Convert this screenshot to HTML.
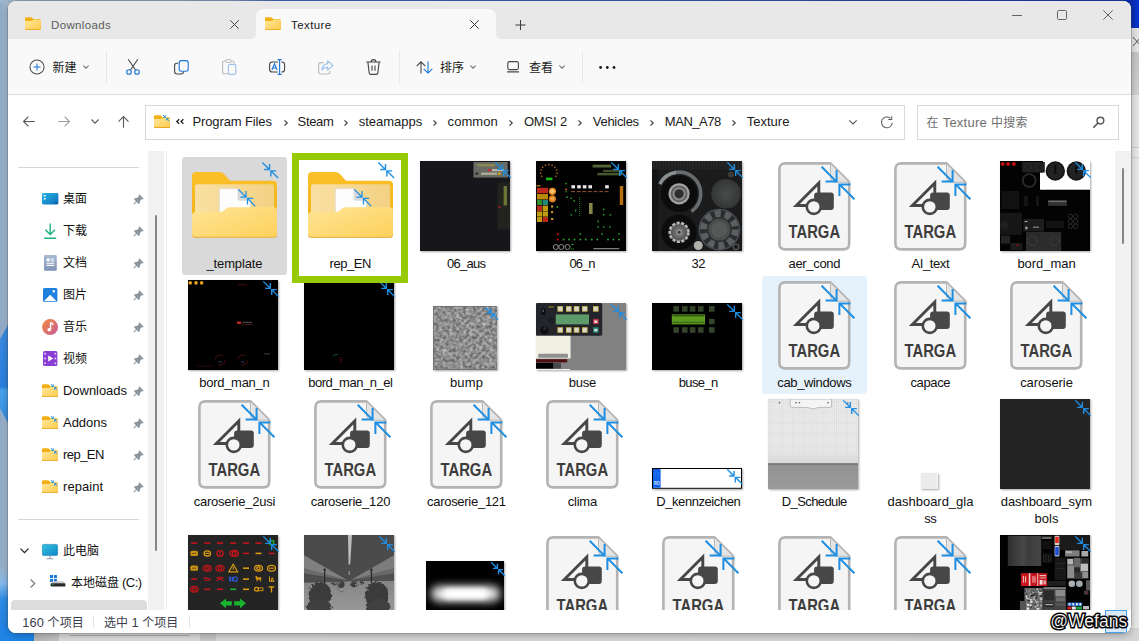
<!DOCTYPE html>
<html lang="zh-CN"><head><meta charset="utf-8"><title>Texture</title>
<style>
*{box-sizing:border-box;margin:0;padding:0}
html,body{width:1139px;height:641px;overflow:hidden}
body{position:relative;background:#a6bbd0;font-family:"Liberation Sans","Noto Sans CJK SC",sans-serif;font-size:13px;color:#111;}
.abs{position:absolute}
.cj{font-family:"Noto Sans CJK SC","Liberation Sans",sans-serif;font-size:12px}
.t{position:absolute;white-space:nowrap;line-height:16px;height:16px}
#win{position:absolute;left:8px;top:1px;width:1123px;height:631.5px;border-radius:8px;background:#fff;overflow:hidden;box-shadow:0 0 0 0.6px rgba(80,80,80,.45),0 2px 9px rgba(0,0,0,.3)}
#tabbar{position:absolute;left:0;top:0;width:1139px;height:39px;background:#e8e8e8}
#toolbar{position:absolute;left:0;top:39px;width:1139px;height:56px;background:#f9f9f9;border-bottom:1px solid #dadada}
#navbar{position:absolute;left:0;top:95px;width:1139px;height:56px;background:#fff}
.sep{position:absolute;width:1px;background:#e9e9e9}
.lbl{position:absolute;width:116px;text-align:center;line-height:17px;font-size:13px;color:#111;white-space:nowrap}
.thumb{position:absolute;box-shadow:1px 1px 2px rgba(0,0,0,.35)}
svg.thumb{overflow:hidden}
svg{position:absolute;overflow:visible}
</style></head><body>
<svg style="left:0;top:0" width="14" height="641" viewBox="0 0 14 641"><defs><linearGradient id="wl1" x1="0" y1="0" x2="1" y2="0"><stop offset="0" stop-color="#8fabc9"/><stop offset="0.6" stop-color="#a9bed3"/><stop offset="1" stop-color="#9fb3c6"/></linearGradient><linearGradient id="wl2" x1="0" y1="0" x2="0" y2="1"><stop offset="0" stop-color="#a6bbd0" stop-opacity="0"/><stop offset="0.873" stop-color="#a6bbd0" stop-opacity="0"/><stop offset="0.91" stop-color="#86bdf0"/><stop offset="0.935" stop-color="#2f8ee9"/><stop offset="1" stop-color="#1c80e4"/></linearGradient><linearGradient id="wl3" x1="0" y1="0" x2="0" y2="1"><stop offset="0" stop-color="#3e8fe6"/><stop offset="0.62" stop-color="#2a80de"/><stop offset="0.66" stop-color="#49a4f0"/><stop offset="1" stop-color="#2f8de6"/></linearGradient></defs><rect width="14" height="641" fill="url(#wl1)"/><path d="M9 323L0 339V408L9 425Z" fill="url(#wl3)"/><rect width="14" height="641" fill="url(#wl2)"/></svg><div class="abs" style="left:0;top:0;width:1139px;height:3px;background:linear-gradient(90deg,#9fb6cd 0,#8aa6cc 20%,#3a68c8 24%,#2a55c0 60%,#1a34b4 85%,#0a2cae 100%)"></div><div class="abs" style="left:1120px;top:0;width:19px;height:28px;background:linear-gradient(90deg,#0a2cae 0,#0a2cae 12px,#0434d0 17px)"></div><div class="abs" style="left:1125px;top:27.5px;width:14px;height:614px;background:#e9e9e9"></div><div class="abs" style="left:1125px;top:27.5px;width:14px;height:25px;background:#e5e5e5"></div><div class="abs" style="left:1125px;top:52px;width:14px;height:43px;background:linear-gradient(180deg,#c6c6c6,#d0d0d0)"></div><div class="abs" style="left:1125px;top:95px;width:14px;height:52px;background:#e6e6e6"></div><svg style="left:1132.5px;top:37px" width="8" height="9"><path d="M0 0L8 9M8 0L0 9" stroke="#555" stroke-width="1" fill="none"/></svg><div class="abs" style="left:1131px;top:147px;width:8px;height:1px;background:#cfcfcf"></div><div class="abs" style="left:1131px;top:157px;width:8px;height:1px;background:#d4d4d4"></div><div class="abs" style="left:0;top:628px;width:1139px;height:13px;background:linear-gradient(90deg,#1f86e8 0,#1f86e8 34px,#b9b9b9 34px,#c6c6c6 59px,#dedede 59px,#dedede 200px,#c9c9c9 200px,#c9c9c9 216px,#d9d9d9 216px,#d6d6d6 100%)"></div><div class="abs" style="left:70px;top:635px;width:120px;height:1px;background:#b0b0b0"></div><div id="win"><div class="abs" id="in" style="left:-8px;top:-1px;width:1139px;height:641px"><div id="tabbar"></div><div class="abs" style="left:256px;top:8.5px;width:240px;height:31px;background:#f9f9f9;border-radius:7px 7px 0 0"></div><svg style="left:250px;top:33px" width="6" height="6"><path d="M6 0V6H0Q6 6 6 0Z" fill="#f9f9f9"/></svg><svg style="left:496px;top:33px" width="6" height="6"><path d="M0 0V6H6Q0 6 0 0Z" fill="#f9f9f9"/></svg><svg style="left:25px;top:16.9px" width="15.8" height="12.8" viewBox="0 0 16 13" preserveAspectRatio="none"><defs><linearGradient id="fs1" x1="0" y1="0" x2="1" y2="1"><stop offset="0" stop-color="#ffe79c"/><stop offset="1" stop-color="#fdca4c"/></linearGradient></defs><path d="M0 1.4Q0 0.2 1.2 0.2H5.7Q6.5 0.2 7.1 0.8L8.7 2.3H14.8Q16 2.3 16 3.5V11.8Q16 13 14.8 13H1.2Q0 13 0 11.8Z" fill="#f1b013"/><path d="M0 4.9Q0 4 0.9 4H6.2Q7 4 7.6 3.5L8.3 3Q8.8 2.7 9.5 2.7H15Q16 2.7 16 3.7V11.8Q16 13 14.8 13H1.2Q0 13 0 11.8Z" fill="url(#fs1)"/><path d="M0 11.2V11.8Q0 13 1.2 13H14.8Q16 13 16 11.8V11.2Q16 12.2 14.8 12.2H1.2Q0 12.2 0 11.2Z" fill="#e6a823"/></svg><div class="t" style="left:51px;top:16.6px;color:#5c5c5c;font-size:11.5px;letter-spacing:0.36px">Downloads</div><svg style="left:229.5px;top:19.5px" width="9" height="9"><path d="M0.3 0.3L8.7 8.7M8.7 0.3L0.3 8.7" stroke="#444" stroke-width="1" fill="none"/></svg><svg style="left:264.5px;top:16.9px" width="15.8" height="12.8" viewBox="0 0 16 13" preserveAspectRatio="none"><defs><linearGradient id="fs2" x1="0" y1="0" x2="1" y2="1"><stop offset="0" stop-color="#ffe79c"/><stop offset="1" stop-color="#fdca4c"/></linearGradient></defs><path d="M0 1.4Q0 0.2 1.2 0.2H5.7Q6.5 0.2 7.1 0.8L8.7 2.3H14.8Q16 2.3 16 3.5V11.8Q16 13 14.8 13H1.2Q0 13 0 11.8Z" fill="#f1b013"/><path d="M0 4.9Q0 4 0.9 4H6.2Q7 4 7.6 3.5L8.3 3Q8.8 2.7 9.5 2.7H15Q16 2.7 16 3.7V11.8Q16 13 14.8 13H1.2Q0 13 0 11.8Z" fill="url(#fs2)"/><path d="M0 11.2V11.8Q0 13 1.2 13H14.8Q16 13 16 11.8V11.2Q16 12.2 14.8 12.2H1.2Q0 12.2 0 11.2Z" fill="#e6a823"/></svg><div class="t" style="left:291px;top:16.6px;color:#1a1a1a;font-size:11.5px;letter-spacing:0.42px">Texture</div><svg style="left:470px;top:19.5px" width="9" height="9"><path d="M0.3 0.3L8.7 8.7M8.7 0.3L0.3 8.7" stroke="#333" stroke-width="1" fill="none"/></svg><svg style="left:515px;top:19.5px" width="10" height="10"><path d="M5.5 0V10M0.5 5H10.5" stroke="#3a3a3a" stroke-width="1" fill="none"/></svg><svg style="left:1011.5px;top:15px" width="10" height="1"><path d="M0 0.5H10" stroke="#666" stroke-width="1"/></svg><svg style="left:1056.5px;top:10px" width="10" height="10"><rect x="0.5" y="0.5" width="9" height="9" rx="1" fill="none" stroke="#666" stroke-width="1"/></svg><svg style="left:1103px;top:10px" width="10" height="10"><path d="M0.3 0.3L9.7 9.7M9.7 0.3L0.3 9.7" stroke="#666" stroke-width="1" fill="none"/></svg><div id="toolbar"></div><svg style="left:28.5px;top:58.5px" width="16" height="16"><circle cx="8" cy="8" r="7.05" fill="none" stroke="#4a4a4a" stroke-width="1.05"/><path d="M8 4.5V11.5M4.5 8H11.5" stroke="#0f72d9" stroke-width="1" fill="none"/></svg><div class="t cj" style="left:52.5px;top:58.7px;color:#1a1a1a">新建</div><svg style="left:83px;top:64.9px" width="6" height="4"><path d="M0.3 0.5L3 3.2L5.7 0.5" stroke="#6a6a6a" stroke-width="1.05" fill="none"/></svg><div class="sep" style="left:106px;top:51px;height:32px"></div><svg style="left:126px;top:59px" width="14" height="16"><path d="M2.2 0.2L9.5 11M11.8 0.2L4.5 11" stroke="#444" stroke-width="1.1" fill="none"/><circle cx="3" cy="13" r="2.3" fill="none" stroke="#1a73d8" stroke-width="1.1"/><circle cx="11" cy="13" r="2.3" fill="none" stroke="#1a73d8" stroke-width="1.1"/></svg><svg style="left:174px;top:59.5px" width="15" height="15"><path d="M4.2 3.2H3Q0.6 3.2 0.6 5.6V11.6Q0.6 14 3 14H7Q9.4 14 9.4 11.8" stroke="#444" stroke-width="1.1" fill="none"/><rect x="5.2" y="0.6" width="9" height="10.6" rx="2.2" fill="none" stroke="#1a73d8" stroke-width="1.1"/></svg><svg style="left:221.5px;top:59px" width="15" height="16" opacity="0.42"><path d="M6.5 14.8H2.2Q0.6 14.8 0.6 13.2V3.6Q0.6 2 2.2 2H3.6M9.4 2H10.6Q12.2 2 12.2 3.6V4.6" stroke="#666" stroke-width="1.1" fill="none"/><rect x="3.6" y="0.6" width="5.8" height="2.8" rx="1.2" fill="none" stroke="#666" stroke-width="1"/><rect x="6.4" y="5.4" width="7.4" height="10" rx="1.6" fill="none" stroke="#1a73d8" stroke-width="1.1"/></svg><svg style="left:269px;top:59px" width="17" height="16"><path d="M8.8 3H3.4Q0.6 3 0.6 5.8V10.2Q0.6 13 3.4 13H8.8M12.4 3H12.8Q15.6 3 15.6 5.8V10.2Q15.6 13 12.8 13H12.4" stroke="#444" stroke-width="1.1" fill="none"/><path d="M10.6 0.6V15.4M8.6 0.6H12.6M8.6 15.4H12.6" stroke="#1a73d8" stroke-width="1.1" fill="none"/><path d="M2.9 11L5.5 4.8L8.1 11M3.8 9H7.2" stroke="#1a73d8" stroke-width="1.1" fill="none"/></svg><svg style="left:317.5px;top:59.5px" width="16" height="15" opacity="0.42"><path d="M5.4 2.6H3Q0.6 2.6 0.6 5V11.6Q0.6 14 3 14H9.6Q12 14 12 11.6V11" stroke="#666" stroke-width="1.1" fill="none"/><path d="M9.6 0.8L15 5.4L9.6 10V7.4Q5.8 7.2 3.8 10Q4.4 4.2 9.6 3.6Z" stroke="#1a73d8" stroke-width="1.1" fill="none" stroke-linejoin="round"/></svg><svg style="left:365.5px;top:59px" width="15" height="16"><path d="M0.4 3H14.6M5 3Q5 0.6 7.5 0.6Q10 0.6 10 3M1.9 3L3.1 13.6Q3.3 15.4 5 15.4H10Q11.7 15.4 11.9 13.6L13.1 3M6 6.4V11.8M9 6.4V11.8" stroke="#444" stroke-width="1.1" fill="none"/></svg><div class="sep" style="left:399px;top:51px;height:32px"></div><svg style="left:415.5px;top:60.5px" width="17" height="13"><path d="M5 12.4V0.8M0.7 5.1L5 0.8L9.3 5.1" stroke="#444" stroke-width="1.05" fill="none"/><path d="M12 0.5V12.1M7.7 7.8L12 12.1L16.3 7.8" stroke="#0f72d9" stroke-width="1.05" fill="none"/></svg><div class="t cj" style="left:440px;top:58.7px;color:#1a1a1a">排序</div><svg style="left:470px;top:64.9px" width="6" height="4"><path d="M0.3 0.5L3 3.2L5.7 0.5" stroke="#6a6a6a" stroke-width="1.05" fill="none"/></svg><svg style="left:507px;top:60.5px" width="13" height="12"><rect x="0.8" y="0.6" width="10.6" height="8" rx="1.6" fill="none" stroke="#444" stroke-width="1.1"/><path d="M0.2 10.9H12" stroke="#444" stroke-width="1.1"/></svg><div class="t cj" style="left:529px;top:58.7px;color:#1a1a1a">查看</div><svg style="left:559px;top:64.9px" width="6" height="4"><path d="M0.3 0.5L3 3.2L5.7 0.5" stroke="#6a6a6a" stroke-width="1.05" fill="none"/></svg><div class="sep" style="left:582px;top:51px;height:32px"></div><svg style="left:598.5px;top:65.8px" width="17" height="3"><circle cx="1.6" cy="1.5" r="1.4" fill="#1c1c1c"/><circle cx="8.3" cy="1.5" r="1.4" fill="#1c1c1c"/><circle cx="15" cy="1.5" r="1.4" fill="#1c1c1c"/></svg><div id="navbar"></div><svg style="left:23px;top:116.4px" width="12" height="11"><path d="M11.8 5.5H0.8M5.4 0.7L0.6 5.5L5.4 10.3" stroke="#555" stroke-width="1.15" fill="none"/></svg><svg style="left:58px;top:116.4px" width="12" height="11"><path d="M0.2 5.5H11.2M6.6 0.7L11.4 5.5L6.6 10.3" stroke="#a0a0a0" stroke-width="1.15" fill="none"/></svg><svg style="left:90.5px;top:119px" width="8" height="5"><path d="M0.4 0.5L4 4.1L7.6 0.5" stroke="#5a5a5a" stroke-width="1.1" fill="none"/></svg><svg style="left:118px;top:115.5px" width="11" height="12"><path d="M5.5 11.8V0.8M0.5 5.6L5.5 0.6L10.5 5.6" stroke="#5a5a5a" stroke-width="1.1" fill="none"/></svg><div class="abs" style="left:145px;top:105px;width:760px;height:35px;border:1px solid #d9d9d9;background:#fff"></div><svg style="left:154px;top:114.8px" width="16" height="12.9" viewBox="0 0 16 13" preserveAspectRatio="none"><defs><linearGradient id="fs3" x1="0" y1="0" x2="1" y2="1"><stop offset="0" stop-color="#ffe79c"/><stop offset="1" stop-color="#fdca4c"/></linearGradient></defs><path d="M0 1.4Q0 0.2 1.2 0.2H5.7Q6.5 0.2 7.1 0.8L8.7 2.3H14.8Q16 2.3 16 3.5V11.8Q16 13 14.8 13H1.2Q0 13 0 11.8Z" fill="#f1b013"/><path d="M0 4.9Q0 4 0.9 4H6.2Q7 4 7.6 3.5L8.3 3Q8.8 2.7 9.5 2.7H15Q16 2.7 16 3.7V11.8Q16 13 14.8 13H1.2Q0 13 0 11.8Z" fill="url(#fs3)"/><path d="M0 11.2V11.8Q0 13 1.2 13H14.8Q16 13 16 11.8V11.2Q16 12.2 14.8 12.2H1.2Q0 12.2 0 11.2Z" fill="#e6a823"/><g stroke="#2a95e8" stroke-width="0.95" fill="none"><path d="M8.8 -0.2L11.2 2.2M9.3 2.4H11.4V0.3"/><path d="M15.2 6.2L12.8 3.8M14.7 3.6H12.6V5.7"/></g></svg><svg style="left:176.2px;top:119.2px" width="8" height="5"><path d="M3.2 0.3L0.8 2.5L3.2 4.7M7.4 0.3L5 2.5L7.4 4.7" stroke="#222" stroke-width="1.35" fill="none"/></svg><div class="t" style="left:192.5px;top:113.5px;letter-spacing:-0.12px;color:#1a1a1a">Program Files</div><div class="t" style="left:297.6px;top:113.5px;letter-spacing:-0.36px;color:#1a1a1a">Steam</div><div class="t" style="left:358.8px;top:113.5px;letter-spacing:-0.03px;color:#1a1a1a">steamapps</div><div class="t" style="left:447.6px;top:113.5px;letter-spacing:0.07px;color:#1a1a1a">common</div><div class="t" style="left:523.9px;top:113.5px;letter-spacing:-0.13px;color:#1a1a1a">OMSI 2</div><div class="t" style="left:592.8px;top:113.5px;letter-spacing:-0.30px;color:#1a1a1a">Vehicles</div><div class="t" style="left:664.8px;top:113.5px;letter-spacing:-0.45px;color:#1a1a1a">MAN_A78</div><div class="t" style="left:746.8px;top:113.5px;letter-spacing:-0.01px;color:#1a1a1a">Texture</div><svg style="left:283.5px;top:119.5px" width="4" height="6"><path d="M0.5 0.4L3.2 3L0.5 5.6" stroke="#444" stroke-width="1.25" fill="none"/></svg><svg style="left:343.9px;top:119.5px" width="4" height="6"><path d="M0.5 0.4L3.2 3L0.5 5.6" stroke="#444" stroke-width="1.25" fill="none"/></svg><svg style="left:433.4px;top:119.5px" width="4" height="6"><path d="M0.5 0.4L3.2 3L0.5 5.6" stroke="#444" stroke-width="1.25" fill="none"/></svg><svg style="left:509.3px;top:119.5px" width="4" height="6"><path d="M0.5 0.4L3.2 3L0.5 5.6" stroke="#444" stroke-width="1.25" fill="none"/></svg><svg style="left:577.9px;top:119.5px" width="4" height="6"><path d="M0.5 0.4L3.2 3L0.5 5.6" stroke="#444" stroke-width="1.25" fill="none"/></svg><svg style="left:650.4px;top:119.5px" width="4" height="6"><path d="M0.5 0.4L3.2 3L0.5 5.6" stroke="#444" stroke-width="1.25" fill="none"/></svg><svg style="left:732.4px;top:119.5px" width="4" height="6"><path d="M0.5 0.4L3.2 3L0.5 5.6" stroke="#444" stroke-width="1.25" fill="none"/></svg><svg style="left:849px;top:120px" width="8" height="5"><path d="M0.3 0.3L4 4L7.7 0.3" stroke="#555" stroke-width="1.1" fill="none"/></svg><svg style="left:880px;top:115.5px" width="13" height="13"><path d="M10.4 2.3A5.4 5.4 0 1 0 12.28 6.9" stroke="#5f5f5f" stroke-width="1.05" fill="none"/><path d="M11.7 0.2V3.5H8.3" stroke="#5f5f5f" stroke-width="1.05" fill="none"/></svg><div class="abs" style="left:917px;top:105px;width:202px;height:35px;border:1px solid #d9d9d9;background:#fff"></div><div class="t" style="left:926.5px;top:114px;color:#6e6e6e;letter-spacing:0.25px"><span class="cj">在</span> Texture <span class="cj">中搜索</span></div><svg style="left:1092.5px;top:116px" width="12" height="12"><circle cx="7.4" cy="4.6" r="3.4" fill="none" stroke="#555" stroke-width="1.4"/><path d="M5 7L0.8 11.2" stroke="#555" stroke-width="1.6" stroke-linecap="round"/></svg><div class="abs" style="left:0;top:150.5px;width:1139px;height:459px;overflow:hidden"><div class="abs" style="left:0;top:-150.5px;width:1139px;height:641px"><div class="abs" style="left:18px;top:166.5px;width:121px;height:1px;background:#d6d6d6"></div><div class="abs" style="left:148px;top:151px;width:16px;height:459px;background:#f1f1f1"></div><div class="abs" style="left:155px;top:215px;width:2.4px;height:336px;background:#858585;border-radius:1px"></div><div class="abs" style="left:166px;top:151px;width:1px;height:459px;background:#ededed"></div><svg style="left:41.8px;top:193.3px" width="16.4" height="11.4" viewBox="0 0 16.4 11.4"><defs><linearGradient id="gd" x1="0" y1="0" x2="1" y2="1"><stop offset="0" stop-color="#29b6e6"/><stop offset="1" stop-color="#0a6db8"/></linearGradient></defs><rect x="0" y="0" width="16.4" height="11.4" rx="1.4" fill="url(#gd)"/><rect x="1.8" y="2" width="1.8" height="1.6" fill="#e8f6ff"/><rect x="1.8" y="5" width="1.8" height="1.6" fill="#e8f6ff"/><rect x="13" y="9.6" width="2.6" height="1.2" fill="#0b4f92"/></svg><svg style="left:44px;top:222.5px" width="12.4" height="16.4" viewBox="0 0 12.4 16.4"><path d="M6.2 0.6V11.4M1.4 6.8L6.2 11.6L11 6.8" stroke="#19b27a" stroke-width="1.35" fill="none"/><path d="M0.2 15.3H12.2" stroke="#19b27a" stroke-width="1.35"/></svg><svg style="left:44px;top:254.7px" width="12.8" height="15.8" viewBox="0 0 12.8 15.8"><defs><linearGradient id="gdoc" x1="0" y1="0" x2="0" y2="1"><stop offset="0" stop-color="#a9b9d1"/><stop offset="1" stop-color="#7f93b5"/></linearGradient></defs><rect x="0" y="0" width="12.8" height="15.8" rx="1.4" fill="url(#gdoc)"/><rect x="2.6" y="3.4" width="3" height="3" fill="#fff"/><path d="M6.6 4H10.2M6.6 6H10.2M2.6 8.2H10.2M2.6 10.4H10.2" stroke="#fff" stroke-width="1.1"/></svg><svg style="left:43px;top:288.0px" width="14.4" height="14" viewBox="0 0 14.4 14"><rect x="0" y="0" width="14.4" height="14" rx="1.6" fill="#1f80e0"/><path d="M0.8 13.2L7.2 6.8L13.6 13.2Z" fill="#fff"/><circle cx="10.8" cy="3.2" r="1.2" fill="#fff"/></svg><svg style="left:41.8px;top:318.5px" width="16.2" height="16.2" viewBox="0 0 16.2 16.2"><defs><linearGradient id="gmu" x1="0" y1="0" x2="1" y2="1"><stop offset="0" stop-color="#f28a3c"/><stop offset="1" stop-color="#c85a9a"/></linearGradient></defs><circle cx="8.1" cy="8.1" r="8" fill="url(#gmu)"/><path d="M8.6 3.4V10.6M8.6 3.4Q10.8 3.8 11 6" stroke="#fff" stroke-width="1.4" fill="none"/><circle cx="7.2" cy="10.8" r="1.8" fill="#fff"/></svg><svg style="left:43px;top:351.1px" width="14.4" height="15" viewBox="0 0 14.4 15"><rect x="0" y="0" width="14.4" height="15" rx="1.6" fill="#8a3dd3"/><path d="M5.2 4.4L10.4 7.5L5.2 10.6Z" fill="#fff"/><g fill="#e6d2fa"><rect x="1.2" y="1.8" width="1.6" height="1.8"/><rect x="1.2" y="6.6" width="1.6" height="1.8"/><rect x="1.2" y="11.4" width="1.6" height="1.8"/><rect x="11.6" y="1.8" width="1.6" height="1.8"/><rect x="11.6" y="6.6" width="1.6" height="1.8"/><rect x="11.6" y="11.4" width="1.6" height="1.8"/></g></svg><svg style="left:42px;top:383.8px" width="15.9" height="13.1" viewBox="0 0 16 13" preserveAspectRatio="none"><defs><linearGradient id="fs4" x1="0" y1="0" x2="1" y2="1"><stop offset="0" stop-color="#ffe79c"/><stop offset="1" stop-color="#fdca4c"/></linearGradient></defs><path d="M0 1.4Q0 0.2 1.2 0.2H5.7Q6.5 0.2 7.1 0.8L8.7 2.3H14.8Q16 2.3 16 3.5V11.8Q16 13 14.8 13H1.2Q0 13 0 11.8Z" fill="#f1b013"/><path d="M0 4.9Q0 4 0.9 4H6.2Q7 4 7.6 3.5L8.3 3Q8.8 2.7 9.5 2.7H15Q16 2.7 16 3.7V11.8Q16 13 14.8 13H1.2Q0 13 0 11.8Z" fill="url(#fs4)"/><path d="M0 11.2V11.8Q0 13 1.2 13H14.8Q16 13 16 11.8V11.2Q16 12.2 14.8 12.2H1.2Q0 12.2 0 11.2Z" fill="#e6a823"/><g stroke="#2a95e8" stroke-width="0.95" fill="none"><path d="M8.8 -0.2L11.2 2.2M9.3 2.4H11.4V0.3"/><path d="M15.2 6.2L12.8 3.8M14.7 3.6H12.6V5.7"/></g></svg><svg style="left:42px;top:415.8px" width="15.9" height="13.1" viewBox="0 0 16 13" preserveAspectRatio="none"><defs><linearGradient id="fs5" x1="0" y1="0" x2="1" y2="1"><stop offset="0" stop-color="#ffe79c"/><stop offset="1" stop-color="#fdca4c"/></linearGradient></defs><path d="M0 1.4Q0 0.2 1.2 0.2H5.7Q6.5 0.2 7.1 0.8L8.7 2.3H14.8Q16 2.3 16 3.5V11.8Q16 13 14.8 13H1.2Q0 13 0 11.8Z" fill="#f1b013"/><path d="M0 4.9Q0 4 0.9 4H6.2Q7 4 7.6 3.5L8.3 3Q8.8 2.7 9.5 2.7H15Q16 2.7 16 3.7V11.8Q16 13 14.8 13H1.2Q0 13 0 11.8Z" fill="url(#fs5)"/><path d="M0 11.2V11.8Q0 13 1.2 13H14.8Q16 13 16 11.8V11.2Q16 12.2 14.8 12.2H1.2Q0 12.2 0 11.2Z" fill="#e6a823"/><g stroke="#2a95e8" stroke-width="0.95" fill="none"><path d="M8.8 -0.2L11.2 2.2M9.3 2.4H11.4V0.3"/><path d="M15.2 6.2L12.8 3.8M14.7 3.6H12.6V5.7"/></g></svg><svg style="left:42px;top:447.8px" width="15.9" height="13.1" viewBox="0 0 16 13" preserveAspectRatio="none"><defs><linearGradient id="fs6" x1="0" y1="0" x2="1" y2="1"><stop offset="0" stop-color="#ffe79c"/><stop offset="1" stop-color="#fdca4c"/></linearGradient></defs><path d="M0 1.4Q0 0.2 1.2 0.2H5.7Q6.5 0.2 7.1 0.8L8.7 2.3H14.8Q16 2.3 16 3.5V11.8Q16 13 14.8 13H1.2Q0 13 0 11.8Z" fill="#f1b013"/><path d="M0 4.9Q0 4 0.9 4H6.2Q7 4 7.6 3.5L8.3 3Q8.8 2.7 9.5 2.7H15Q16 2.7 16 3.7V11.8Q16 13 14.8 13H1.2Q0 13 0 11.8Z" fill="url(#fs6)"/><path d="M0 11.2V11.8Q0 13 1.2 13H14.8Q16 13 16 11.8V11.2Q16 12.2 14.8 12.2H1.2Q0 12.2 0 11.2Z" fill="#e6a823"/><g stroke="#2a95e8" stroke-width="0.95" fill="none"><path d="M8.8 -0.2L11.2 2.2M9.3 2.4H11.4V0.3"/><path d="M15.2 6.2L12.8 3.8M14.7 3.6H12.6V5.7"/></g></svg><svg style="left:42px;top:479.8px" width="15.9" height="13.1" viewBox="0 0 16 13" preserveAspectRatio="none"><defs><linearGradient id="fs7" x1="0" y1="0" x2="1" y2="1"><stop offset="0" stop-color="#ffe79c"/><stop offset="1" stop-color="#fdca4c"/></linearGradient></defs><path d="M0 1.4Q0 0.2 1.2 0.2H5.7Q6.5 0.2 7.1 0.8L8.7 2.3H14.8Q16 2.3 16 3.5V11.8Q16 13 14.8 13H1.2Q0 13 0 11.8Z" fill="#f1b013"/><path d="M0 4.9Q0 4 0.9 4H6.2Q7 4 7.6 3.5L8.3 3Q8.8 2.7 9.5 2.7H15Q16 2.7 16 3.7V11.8Q16 13 14.8 13H1.2Q0 13 0 11.8Z" fill="url(#fs7)"/><path d="M0 11.2V11.8Q0 13 1.2 13H14.8Q16 13 16 11.8V11.2Q16 12.2 14.8 12.2H1.2Q0 12.2 0 11.2Z" fill="#e6a823"/><g stroke="#2a95e8" stroke-width="0.95" fill="none"><path d="M8.8 -0.2L11.2 2.2M9.3 2.4H11.4V0.3"/><path d="M15.2 6.2L12.8 3.8M14.7 3.6H12.6V5.7"/></g></svg><div class="t cj" style="left:63px;top:190.0px">桌面</div><div class="t cj" style="left:63px;top:222.0px">下载</div><div class="t cj" style="left:63px;top:254.0px">文档</div><div class="t cj" style="left:63px;top:286.0px">图片</div><div class="t cj" style="left:63px;top:318.0px">音乐</div><div class="t cj" style="left:63px;top:350.0px">视频</div><div class="t" style="left:63px;top:382.5px;letter-spacing:-0.04px">Downloads</div><div class="t" style="left:63px;top:414.5px;letter-spacing:-0.02px">Addons</div><div class="t" style="left:63px;top:446.5px;letter-spacing:-0.55px">rep_EN</div><div class="t" style="left:63px;top:478.5px;letter-spacing:0.06px">repaint</div><svg style="left:133.4px;top:193.7px" width="11" height="11" viewBox="0 0 11 11"><path d="M6.3 0.3L10.7 4.7L9.5 5.4L8.7 5.2L7 6.9L6.7 9.3L5.7 10L3.8 8.1L1.2 10.5L0.5 9.8L2.9 7.2L1 5.3L1.7 4.3L4.1 4L5.8 2.3L5.6 1.5Z" fill="#8b969e"/></svg><svg style="left:133.4px;top:225.7px" width="11" height="11" viewBox="0 0 11 11"><path d="M6.3 0.3L10.7 4.7L9.5 5.4L8.7 5.2L7 6.9L6.7 9.3L5.7 10L3.8 8.1L1.2 10.5L0.5 9.8L2.9 7.2L1 5.3L1.7 4.3L4.1 4L5.8 2.3L5.6 1.5Z" fill="#8b969e"/></svg><svg style="left:133.4px;top:257.7px" width="11" height="11" viewBox="0 0 11 11"><path d="M6.3 0.3L10.7 4.7L9.5 5.4L8.7 5.2L7 6.9L6.7 9.3L5.7 10L3.8 8.1L1.2 10.5L0.5 9.8L2.9 7.2L1 5.3L1.7 4.3L4.1 4L5.8 2.3L5.6 1.5Z" fill="#8b969e"/></svg><svg style="left:133.4px;top:289.7px" width="11" height="11" viewBox="0 0 11 11"><path d="M6.3 0.3L10.7 4.7L9.5 5.4L8.7 5.2L7 6.9L6.7 9.3L5.7 10L3.8 8.1L1.2 10.5L0.5 9.8L2.9 7.2L1 5.3L1.7 4.3L4.1 4L5.8 2.3L5.6 1.5Z" fill="#8b969e"/></svg><svg style="left:133.4px;top:321.7px" width="11" height="11" viewBox="0 0 11 11"><path d="M6.3 0.3L10.7 4.7L9.5 5.4L8.7 5.2L7 6.9L6.7 9.3L5.7 10L3.8 8.1L1.2 10.5L0.5 9.8L2.9 7.2L1 5.3L1.7 4.3L4.1 4L5.8 2.3L5.6 1.5Z" fill="#8b969e"/></svg><svg style="left:133.4px;top:353.7px" width="11" height="11" viewBox="0 0 11 11"><path d="M6.3 0.3L10.7 4.7L9.5 5.4L8.7 5.2L7 6.9L6.7 9.3L5.7 10L3.8 8.1L1.2 10.5L0.5 9.8L2.9 7.2L1 5.3L1.7 4.3L4.1 4L5.8 2.3L5.6 1.5Z" fill="#8b969e"/></svg><svg style="left:133.4px;top:385.7px" width="11" height="11" viewBox="0 0 11 11"><path d="M6.3 0.3L10.7 4.7L9.5 5.4L8.7 5.2L7 6.9L6.7 9.3L5.7 10L3.8 8.1L1.2 10.5L0.5 9.8L2.9 7.2L1 5.3L1.7 4.3L4.1 4L5.8 2.3L5.6 1.5Z" fill="#8b969e"/></svg><svg style="left:133.4px;top:417.7px" width="11" height="11" viewBox="0 0 11 11"><path d="M6.3 0.3L10.7 4.7L9.5 5.4L8.7 5.2L7 6.9L6.7 9.3L5.7 10L3.8 8.1L1.2 10.5L0.5 9.8L2.9 7.2L1 5.3L1.7 4.3L4.1 4L5.8 2.3L5.6 1.5Z" fill="#8b969e"/></svg><svg style="left:133.4px;top:449.7px" width="11" height="11" viewBox="0 0 11 11"><path d="M6.3 0.3L10.7 4.7L9.5 5.4L8.7 5.2L7 6.9L6.7 9.3L5.7 10L3.8 8.1L1.2 10.5L0.5 9.8L2.9 7.2L1 5.3L1.7 4.3L4.1 4L5.8 2.3L5.6 1.5Z" fill="#8b969e"/></svg><svg style="left:133.4px;top:481.7px" width="11" height="11" viewBox="0 0 11 11"><path d="M6.3 0.3L10.7 4.7L9.5 5.4L8.7 5.2L7 6.9L6.7 9.3L5.7 10L3.8 8.1L1.2 10.5L0.5 9.8L2.9 7.2L1 5.3L1.7 4.3L4.1 4L5.8 2.3L5.6 1.5Z" fill="#8b969e"/></svg><div class="abs" style="left:18px;top:519px;width:121px;height:1px;background:#d6d6d6"></div><svg style="left:20px;top:547.9px" width="9" height="6"><path d="M0.5 0.6L4.5 4.6L8.5 0.6" stroke="#222" stroke-width="1.3" fill="none"/></svg><svg style="left:42px;top:543.5px" width="16" height="15.4" viewBox="0 0 16 15.4"><defs><linearGradient id="gpc" x1="0" y1="0" x2="1" y2="1"><stop offset="0" stop-color="#35c2e2"/><stop offset="1" stop-color="#0f86c6"/></linearGradient></defs><rect x="0.4" y="0.4" width="15.2" height="11.2" rx="1.4" fill="url(#gpc)" stroke="#1a7fb5" stroke-width="0.6"/><path d="M8 11.6V14.4M4.6 14.7H11.4" stroke="#8a9aa6" stroke-width="1.1"/></svg><div class="t cj" style="left:63px;top:542.0px">此电脑</div><svg style="left:29.5px;top:578.7px" width="6" height="9"><path d="M0.6 0.5L4.8 4.5L0.6 8.5" stroke="#777" stroke-width="1.1" fill="none"/></svg><svg style="left:50px;top:575.1px" width="15.4" height="12" viewBox="0 0 15.4 12"><g fill="#1a78d6"><rect x="0" y="0" width="3" height="3"/><rect x="3.9" y="0" width="3" height="3"/><rect x="0" y="3.9" width="3" height="3"/><rect x="3.9" y="3.9" width="3" height="3"/></g><path d="M2.4 7.6L4 6.2H13L15.2 8.4H0.8Z" fill="#c8c8c8"/><rect x="0.6" y="8.2" width="14.8" height="3.2" rx="0.6" fill="#2b2b2b"/><rect x="2.2" y="9.2" width="1.2" height="1" fill="#38d048"/></svg><div class="t cj" style="left:71px;top:574.0px">本地磁盘<span style="font-family:'Liberation Sans';font-size:13px;letter-spacing:-0.55px"> (C:)</span></div><div class="abs" style="left:10.5px;top:599.5px;width:136px;height:32px;background:#dcdcdc;border-radius:4px"></div><div class="abs" style="left:182px;top:157px;width:105px;height:118px;background:#d9d9d9;border-radius:3px"></div><div class="abs" style="left:762px;top:276px;width:105px;height:117.5px;background:#e5f1fb;border-radius:3px"></div><svg style="left:191.8px;top:171.5px" width="85" height="66" viewBox="0 0 85 66.5" preserveAspectRatio="none"><defs><linearGradient id="fb1" x1="0" y1="0" x2="0" y2="1"><stop offset="0" stop-color="#fbc02a"/><stop offset="1" stop-color="#efae12"/></linearGradient><linearGradient id="fb2" x1="0" y1="0" x2="1" y2="1"><stop offset="0" stop-color="#ffe596"/><stop offset="1" stop-color="#fdd05a"/></linearGradient><linearGradient id="fb3" x1="0" y1="0" x2="1" y2="0"><stop offset="0" stop-color="#f9e0a2"/><stop offset="1" stop-color="#f3d184"/></linearGradient></defs><path d="M0 4Q0 0 4 0H27Q30 0 32 2L38 8.8H81Q85 8.8 85 12.8V62.5Q85 66.5 81 66.5H4Q0 66.5 0 62.5Z" fill="url(#fb1)"/><path d="M3 14.4Q3 12.4 5 12.4H80Q82 12.4 82 14.4V50H3Z" fill="url(#fb3)"/><path d="M27.4 16.8H45.6L58.6 29V50H27.4Z" fill="#fdfdfd"/><path d="M27.4 16.8H45.6L58.6 29V50H27.4Z" fill="none" stroke="#d8d8d8" stroke-width="0.6"/><path d="M45.6 16.8V27Q45.6 29 47.6 29H58.6Z" fill="#d9d9d9"/><path d="M0 44Q0 40.4 3.6 40.4H27Q30 40.4 31.6 39L34.4 36.6Q36 35.6 38 35.6H81.6Q85 35.6 85 39V62.5Q85 66.5 81 66.5H4Q0 66.5 0 62.5Z" fill="url(#fb2)"/><path d="M0 61.5V62.5Q0 66.5 4 66.5H81Q85 66.5 85 62.5V61.5Q85 65.3 81 65.3H4Q0 65.3 0 61.5Z" fill="#e9b84e"/></svg><svg style="left:237.8px;top:189.1px" width="17.5" height="17.5" viewBox="0 0 34 34"><g stroke="#1e8ee2" stroke-width="2.43" fill="none" stroke-linecap="butt"><path d="M0.6 0.8L15.4 15.6M4.6 15.6H16.4M15.6 4V16.4"/><path d="M33.4 33.2L18.6 18.4M29.4 18.4H17.6M18.4 30V17.6"/></g></svg><svg style="left:262.2px;top:162.2px" width="16.4" height="16.4" viewBox="0 0 34 34"><g stroke="#1e8ee2" stroke-width="2.90" fill="none" stroke-linecap="butt"><path d="M0.6 0.8L15.4 15.6M4.6 15.6H16.4M15.6 4V16.4"/><path d="M33.4 33.2L18.6 18.4M29.4 18.4H17.6M18.4 30V17.6"/></g></svg><div class="lbl" style="left:176.5px;top:254.8px"><span style="letter-spacing:-0.13px;margin-right:0.13px">_template</span></div><svg style="left:307.8px;top:171.5px" width="85" height="66" viewBox="0 0 85 66.5" preserveAspectRatio="none"><defs><linearGradient id="fb1" x1="0" y1="0" x2="0" y2="1"><stop offset="0" stop-color="#fbc02a"/><stop offset="1" stop-color="#efae12"/></linearGradient><linearGradient id="fb2" x1="0" y1="0" x2="1" y2="1"><stop offset="0" stop-color="#ffe596"/><stop offset="1" stop-color="#fdd05a"/></linearGradient><linearGradient id="fb3" x1="0" y1="0" x2="1" y2="0"><stop offset="0" stop-color="#f9e0a2"/><stop offset="1" stop-color="#f3d184"/></linearGradient></defs><path d="M0 4Q0 0 4 0H27Q30 0 32 2L38 8.8H81Q85 8.8 85 12.8V62.5Q85 66.5 81 66.5H4Q0 66.5 0 62.5Z" fill="url(#fb1)"/><path d="M3 14.4Q3 12.4 5 12.4H80Q82 12.4 82 14.4V50H3Z" fill="url(#fb3)"/><path d="M27.4 16.8H45.6L58.6 29V50H27.4Z" fill="#fdfdfd"/><path d="M27.4 16.8H45.6L58.6 29V50H27.4Z" fill="none" stroke="#d8d8d8" stroke-width="0.6"/><path d="M45.6 16.8V27Q45.6 29 47.6 29H58.6Z" fill="#d9d9d9"/><path d="M0 44Q0 40.4 3.6 40.4H27Q30 40.4 31.6 39L34.4 36.6Q36 35.6 38 35.6H81.6Q85 35.6 85 39V62.5Q85 66.5 81 66.5H4Q0 66.5 0 62.5Z" fill="url(#fb2)"/><path d="M0 61.5V62.5Q0 66.5 4 66.5H81Q85 66.5 85 62.5V61.5Q85 65.3 81 65.3H4Q0 65.3 0 61.5Z" fill="#e9b84e"/></svg><svg style="left:353.8px;top:189.1px" width="17.5" height="17.5" viewBox="0 0 34 34"><g stroke="#1e8ee2" stroke-width="2.43" fill="none" stroke-linecap="butt"><path d="M0.6 0.8L15.4 15.6M4.6 15.6H16.4M15.6 4V16.4"/><path d="M33.4 33.2L18.6 18.4M29.4 18.4H17.6M18.4 30V17.6"/></g></svg><svg style="left:378.2px;top:162.2px" width="16.4" height="16.4" viewBox="0 0 34 34"><g stroke="#1e8ee2" stroke-width="2.90" fill="none" stroke-linecap="butt"><path d="M0.6 0.8L15.4 15.6M4.6 15.6H16.4M15.6 4V16.4"/><path d="M33.4 33.2L18.6 18.4M29.4 18.4H17.6M18.4 30V17.6"/></g></svg><div class="lbl" style="left:292.5px;top:254.8px"><span style="letter-spacing:-0.43px;margin-right:0.43px">rep_EN</span></div><svg class="thumb" style="left:420.2px;top:161.0px" width="90" height="90" viewBox="0 0 90 90"><rect x="0.0" y="0.0" width="90.0" height="90.0" fill="#17161a" /><rect x="53.5" y="1.0" width="34.2" height="15.6" fill="#686b64" /><rect x="57.0" y="3.0" width="18.0" height="2.4" fill="#8a8a50" /><rect x="68.0" y="8.0" width="3.0" height="2.4" fill="#c03030" /><rect x="72.0" y="8.0" width="12.0" height="2.2" fill="#b8b8a8" /><rect x="61.0" y="11.6" width="16.0" height="2.2" fill="#b0b098" /><rect x="78.0" y="11.4" width="2.6" height="2.6" fill="#d0a020" /><circle cx="56.8" cy="12.6" r="1.4" fill="#2a2a2a" /><rect x="77.6" y="21.4" width="12.4" height="47.0" fill="#22231f" /><rect x="83.6" y="25.0" width="3.4" height="19.5" fill="#6e7436" /><rect x="78.4" y="45.4" width="2.0" height="1.6" fill="#b02020" /></svg><svg style="left:494.59999999999997px;top:162.2px" width="16" height="16" viewBox="0 0 34 34"><g stroke="#1e8ee2" stroke-width="2.97" fill="none" stroke-linecap="butt"><path d="M0.6 0.8L15.4 15.6M4.6 15.6H16.4M15.6 4V16.4"/><path d="M33.4 33.2L18.6 18.4M29.4 18.4H17.6M18.4 30V17.6"/></g></svg><div class="lbl" style="left:408.5px;top:254.8px"><span style="letter-spacing:-0.74px;margin-right:0.74px">06_aus</span></div><svg class="thumb" style="left:536.2px;top:161.0px" width="90" height="90" viewBox="0 0 90 90"><rect x="0.0" y="0.0" width="90.0" height="90.0" fill="#020202" /><rect x="1.0" y="26.8" width="11.0" height="5.5" fill="#c1281c" /><rect x="1.0" y="33.0" width="11.0" height="5.5" fill="#b98a0a" /><rect x="1.0" y="39.0" width="5.0" height="5.0" fill="#2f8f2f" /><rect x="6.6" y="39.0" width="5.4" height="5.0" fill="#1f8a7a" /><rect x="1.0" y="44.6" width="5.0" height="5.4" fill="#b8281c" /><rect x="6.6" y="44.6" width="5.4" height="5.4" fill="#c09a10" /><rect x="1.0" y="50.4" width="5.0" height="5.2" fill="#c09a10" /><rect x="6.6" y="50.4" width="5.4" height="5.2" fill="#c09a10" /><rect x="1.0" y="56.0" width="5.0" height="5.0" fill="#c09a10" /><rect x="6.6" y="56.0" width="5.4" height="5.0" fill="#b8281c" /><rect x="0.4" y="24.2" width="4.0" height="1.2" fill="#c08a10" /><circle cx="16.4" cy="30.3" r="3.6" fill="#e8902a" /><circle cx="16.4" cy="30.3" r="2.0" fill="#f8c878" /><circle cx="16.4" cy="37.8" r="3.6" fill="#d87a1a" /><circle cx="16.4" cy="37.8" r="2.0" fill="#f0a848" /><rect x="15.0" y="44.4" width="2.2" height="2.2" fill="#c09030" /><rect x="15.0" y="50.0" width="2.2" height="2.2" fill="#c09030" /><rect x="15.0" y="57.0" width="2.4" height="2.0" fill="#c09030" /><rect x="35.4" y="24.2" width="3.6" height="3.2" fill="#e8e8e8" /><rect x="41.2" y="24.2" width="3.6" height="3.2" fill="#e8e8e8" /><rect x="46.8" y="24.2" width="3.6" height="3.2" fill="#e8e8e8" /><rect x="52.4" y="24.2" width="3.6" height="3.2" fill="#e8e8e8" /><rect x="69.2" y="24.2" width="3.6" height="3.2" fill="#e8e8e8" /><rect x="35.2" y="30.2" width="3.8" height="0.9" fill="#a85a34" /><rect x="40.8" y="30.2" width="3.8" height="0.9" fill="#a85a34" /><rect x="46.4" y="30.2" width="3.8" height="0.9" fill="#a85a34" /><rect x="52.0" y="30.2" width="3.8" height="0.9" fill="#a85a34" /><rect x="57.6" y="30.2" width="3.8" height="0.9" fill="#a85a34" /><rect x="63.2" y="30.2" width="3.8" height="0.9" fill="#a85a34" /><rect x="68.8" y="30.2" width="3.8" height="0.9" fill="#a85a34" /><rect x="56.6" y="3.7" width="18.4" height="2.8" fill="#56663a" /><rect x="67.0" y="8.8" width="19.0" height="2.2" fill="#3f4f2c" /><rect x="61.5" y="11.8" width="24.5" height="2.6" fill="#46562e" /><rect x="83.8" y="25.0" width="3.4" height="19.0" fill="#b8700a" /><rect x="53.0" y="42.0" width="3.6" height="11.0" fill="#86864a" /><rect x="43.3" y="36.0" width="0.8" height="1.0" fill="#2fa02f" /><rect x="43.3" y="38.0" width="0.8" height="1.0" fill="#2fa02f" /><rect x="43.3" y="40.0" width="0.8" height="1.0" fill="#2fa02f" /><rect x="43.3" y="42.0" width="0.8" height="1.0" fill="#2fa02f" /><rect x="43.3" y="44.0" width="0.8" height="1.0" fill="#2fa02f" /><rect x="43.3" y="46.0" width="0.8" height="1.0" fill="#2fa02f" /><rect x="43.3" y="48.0" width="0.8" height="1.0" fill="#2fa02f" /><rect x="43.3" y="50.0" width="0.8" height="1.0" fill="#2fa02f" /><rect x="43.3" y="52.0" width="0.8" height="1.0" fill="#2fa02f" /><rect x="43.3" y="54.0" width="0.8" height="1.0" fill="#2fa02f" /><circle cx="5.7" cy="15.3" r="0.8" fill="#c87a20" /><circle cx="4.6" cy="12.2" r="0.8" fill="#c87a20" /><circle cx="5.0" cy="9.0" r="0.8" fill="#c87a20" /><circle cx="6.7" cy="6.2" r="0.8" fill="#c87a20" /><circle cx="9.5" cy="4.3" r="0.8" fill="#c87a20" /><circle cx="12.8" cy="3.6" r="0.8" fill="#c87a20" /><circle cx="16.1" cy="4.3" r="0.8" fill="#c87a20" /><circle cx="18.9" cy="6.2" r="0.8" fill="#c87a20" /><circle cx="20.6" cy="9.0" r="0.8" fill="#c87a20" /><circle cx="21.0" cy="12.2" r="0.8" fill="#c87a20" /><circle cx="19.9" cy="15.3" r="0.8" fill="#c87a20" /><rect x="10.0" y="16.6" width="6.4" height="2.6" fill="#16c016" /><circle cx="30.0" cy="22.6" r="0.9" fill="#2a9a2a" /><circle cx="31.0" cy="36.2" r="0.9" fill="#2a9a2a" /><circle cx="35.0" cy="37.3" r="0.9" fill="#2a9a2a" /><circle cx="38.2" cy="39.8" r="0.9" fill="#2a9a2a" /><circle cx="21.4" cy="46.0" r="0.9" fill="#2a9a2a" /><circle cx="39.6" cy="49.5" r="0.9" fill="#2a9a2a" /><circle cx="35.4" cy="53.8" r="0.9" fill="#2a9a2a" /><circle cx="62.2" cy="60.4" r="0.9" fill="#2a9a2a" /><circle cx="62.2" cy="65.8" r="0.9" fill="#2a9a2a" /><circle cx="67.7" cy="65.8" r="0.9" fill="#2a9a2a" /><circle cx="74.0" cy="65.8" r="0.9" fill="#2a9a2a" /><circle cx="67.7" cy="53.8" r="0.9" fill="#2a9a2a" /><circle cx="74.4" cy="53.8" r="0.9" fill="#2a9a2a" /><circle cx="66.0" cy="72.9" r="0.9" fill="#2a9a2a" /><circle cx="83.0" cy="72.9" r="0.9" fill="#2a9a2a" /><circle cx="44.3" cy="72.9" r="0.9" fill="#2a9a2a" /><circle cx="67.7" cy="48.4" r="0.9" fill="#2a9a2a" /><circle cx="27.6" cy="78.6" r="1.0" fill="#2a9a2a" /><circle cx="33.0" cy="78.6" r="1.0" fill="#2a9a2a" /><circle cx="38.5" cy="78.6" r="1.0" fill="#2a9a2a" /><circle cx="44.3" cy="78.6" r="1.0" fill="#2a9a2a" /><circle cx="49.8" cy="78.6" r="1.0" fill="#2a9a2a" /><circle cx="55.7" cy="78.6" r="1.0" fill="#2a9a2a" /><circle cx="61.2" cy="78.6" r="1.0" fill="#2a9a2a" /><circle cx="72.0" cy="78.6" r="1.0" fill="#2a9a2a" /><circle cx="77.5" cy="78.6" r="1.0" fill="#2a9a2a" /><circle cx="83.0" cy="78.6" r="1.0" fill="#2a9a2a" /><circle cx="30.0" cy="28.4" r="1.0" fill="#d06020" /><circle cx="30.0" cy="30.8" r="0.8" fill="#30a030" /><circle cx="21.8" cy="72.9" r="1.1" fill="#c01010" /><circle cx="21.8" cy="78.6" r="1.1" fill="#c01010" /><circle cx="19.8" cy="86.0" r="2.5" fill="none" stroke="#9a9a9a" stroke-width="0.9"/><circle cx="25.3" cy="86.0" r="2.5" fill="none" stroke="#9a9a9a" stroke-width="0.9"/><circle cx="31.5" cy="86.0" r="2.5" fill="none" stroke="#9a9a9a" stroke-width="0.9"/><rect x="57.3" y="87.0" width="26.0" height="1.3" fill="#7a7a7a" /><rect x="35.0" y="83.0" width="3.0" height="0.8" fill="#2a9a2a" /><rect x="35.0" y="87.6" width="3.0" height="0.8" fill="#2a9a2a" /></svg><svg style="left:610.6px;top:162.2px" width="16" height="16" viewBox="0 0 34 34"><g stroke="#1e8ee2" stroke-width="2.97" fill="none" stroke-linecap="butt"><path d="M0.6 0.8L15.4 15.6M4.6 15.6H16.4M15.6 4V16.4"/><path d="M33.4 33.2L18.6 18.4M29.4 18.4H17.6M18.4 30V17.6"/></g></svg><div class="lbl" style="left:524.5px;top:254.8px"><span style="letter-spacing:-1.03px;margin-right:1.03px">06_n</span></div><svg class="thumb" style="left:652.2px;top:161.0px" width="90" height="90" viewBox="0 0 90 90"><rect x="0.0" y="0.0" width="90.0" height="90.0" fill="#1b1b1b" /><defs><pattern id="p32" width="3" height="8" patternUnits="userSpaceOnUse"><rect width="3" height="8" fill="#262626"/><rect width="1.2" height="8" fill="#1d1d1d"/></pattern><radialGradient id="g32a"><stop offset="0" stop-color="#4a4c4c"/><stop offset="1" stop-color="#343636"/></radialGradient></defs><rect x="0.0" y="0.0" width="90.0" height="8.5" fill="url(#p32)" /><rect x="0.0" y="8.0" width="6.0" height="82.0" fill="#141414" /><circle cx="27.1" cy="32.8" r="18.3" fill="#0c0c0c" /><circle cx="27.1" cy="32.8" r="10.6" fill="#a2a2a2" /><circle cx="27.1" cy="32.8" r="8.4" fill="#5e5e5e" /><circle cx="27.1" cy="32.8" r="6.6" fill="#8a8a8a" /><circle cx="27.1" cy="32.8" r="4.6" fill="#2e2e2e" /><path d="M7.9 23.0A21.6 21.6 0 1 1 39.5 50.5" fill="none" stroke="#666b6e" stroke-width="3.6"/><path d="M7.9 23.0A21.6 21.6 0 0 1 24.1 11.4" fill="none" stroke="#8a8f92" stroke-width="3.2"/><circle cx="27.1" cy="71.3" r="17.6" fill="#0c0c0c" /><circle cx="27.1" cy="71.3" r="9.4" fill="#5a5a5a" stroke="#b4b4b4" stroke-width="2.6" stroke-dasharray="3.2 1.4"/><circle cx="27.1" cy="71.3" r="6.0" fill="#6a6a6a" /><circle cx="27.1" cy="71.3" r="3.2" fill="#8a8a8a" /><circle cx="27.1" cy="71.3" r="1.4" fill="#3a3a3a" /><circle cx="74.1" cy="32.8" r="14.8" fill="url(#g32a)" /><circle cx="79.0" cy="13.6" r="3.0" fill="#3a3a3a" /><circle cx="67.4" cy="68.6" r="20.8" fill="#2b2c2e" /><circle cx="67.4" cy="68.6" r="16" fill="none" stroke="#5c5e60" stroke-width="7" stroke-dasharray="6 4.05"/><circle cx="67.4" cy="68.6" r="20.2" fill="none" stroke="#4a5058" stroke-width="1.2"/><circle cx="67.4" cy="68.6" r="11.0" fill="#4b4d4d" /><circle cx="67.4" cy="68.6" r="8.0" fill="#565858" /><circle cx="46.3" cy="84.5" r="4.5" fill="#b2b0aa" /><circle cx="84.0" cy="85.8" r="2.8" fill="none" stroke="#5a5a5a" stroke-width="1.2"/></svg><svg style="left:726.6px;top:162.2px" width="16" height="16" viewBox="0 0 34 34"><g stroke="#1e8ee2" stroke-width="2.97" fill="none" stroke-linecap="butt"><path d="M0.6 0.8L15.4 15.6M4.6 15.6H16.4M15.6 4V16.4"/><path d="M33.4 33.2L18.6 18.4M29.4 18.4H17.6M18.4 30V17.6"/></g></svg><div class="lbl" style="left:640.5px;top:254.8px"><span style="letter-spacing:-0.54px;margin-right:0.54px">32</span></div><svg style="left:778.1px;top:162px" width="73" height="89" viewBox="0 0 73 89"><path d="M7.5 1.4H52.5L71.2 20.2V81.5Q71.2 87.4 65.2 87.4H7.5Q1.4 87.4 1.4 81.5V7.4Q1.4 1.4 7.5 1.4Z" fill="#f5f5f5" stroke="#b3b3b3" stroke-width="2.6" stroke-linejoin="round"/><path d="M52.5 1.6V14.2Q52.5 20.2 58.5 20.2H71Z" fill="#e4e4e4" stroke="#b9b9b9" stroke-width="1" stroke-linejoin="round"/><path d="M40.8 21V43.5H18.3Z" fill="none" stroke="#474747" stroke-width="2.9" stroke-linejoin="miter"/><rect x="36.1" y="30.4" width="19.7" height="17.6" rx="3" fill="#474747"/><circle cx="35.8" cy="44.9" r="7" fill="#f5f5f5" stroke="#474747" stroke-width="2.6"/><text x="36.3" y="75.6" text-anchor="middle" font-family="Liberation Sans, sans-serif" font-weight="700" font-size="18.4" fill="#3d3d3d" textLength="51.6" lengthAdjust="spacingAndGlyphs">TARGA</text></svg><svg style="left:821.1px;top:166.2px" width="34" height="34" viewBox="0 0 34 34"><g stroke="#1e8ee2" stroke-width="2.00" fill="none" stroke-linecap="butt"><path d="M0.6 0.8L15.4 15.6M4.6 15.6H16.4M15.6 4V16.4"/><path d="M33.4 33.2L18.6 18.4M29.4 18.4H17.6M18.4 30V17.6"/></g></svg><div class="lbl" style="left:756.5px;top:254.8px"><span style="letter-spacing:-0.34px;margin-right:0.34px">aer_cond</span></div><svg style="left:894.1px;top:162px" width="73" height="89" viewBox="0 0 73 89"><path d="M7.5 1.4H52.5L71.2 20.2V81.5Q71.2 87.4 65.2 87.4H7.5Q1.4 87.4 1.4 81.5V7.4Q1.4 1.4 7.5 1.4Z" fill="#f5f5f5" stroke="#b3b3b3" stroke-width="2.6" stroke-linejoin="round"/><path d="M52.5 1.6V14.2Q52.5 20.2 58.5 20.2H71Z" fill="#e4e4e4" stroke="#b9b9b9" stroke-width="1" stroke-linejoin="round"/><path d="M40.8 21V43.5H18.3Z" fill="none" stroke="#474747" stroke-width="2.9" stroke-linejoin="miter"/><rect x="36.1" y="30.4" width="19.7" height="17.6" rx="3" fill="#474747"/><circle cx="35.8" cy="44.9" r="7" fill="#f5f5f5" stroke="#474747" stroke-width="2.6"/><text x="36.3" y="75.6" text-anchor="middle" font-family="Liberation Sans, sans-serif" font-weight="700" font-size="18.4" fill="#3d3d3d" textLength="51.6" lengthAdjust="spacingAndGlyphs">TARGA</text></svg><svg style="left:937.1px;top:166.2px" width="34" height="34" viewBox="0 0 34 34"><g stroke="#1e8ee2" stroke-width="2.00" fill="none" stroke-linecap="butt"><path d="M0.6 0.8L15.4 15.6M4.6 15.6H16.4M15.6 4V16.4"/><path d="M33.4 33.2L18.6 18.4M29.4 18.4H17.6M18.4 30V17.6"/></g></svg><div class="lbl" style="left:872.5px;top:254.8px"><span style="letter-spacing:-0.38px;margin-right:0.38px">AI_text</span></div><svg class="thumb" style="left:1000.2px;top:161.0px" width="90" height="90" viewBox="0 0 90 90"><rect x="0.0" y="0.0" width="90.0" height="90.0" fill="#030303" /><rect x="43.0" y="0.0" width="47.0" height="28.7" fill="#ffffff" /><rect x="40.0" y="11.5" width="4.0" height="17.2" fill="#ffffff" /><circle cx="55.3" cy="10.0" r="9.7" fill="#151515" /><circle cx="55.3" cy="10.0" r="8.0" fill="#222" /><rect x="54.3" y="4.0" width="2.0" height="9.0" fill="#0a0a0a" /><circle cx="76.3" cy="10.0" r="9.7" fill="#151515" /><circle cx="76.3" cy="10.0" r="8.0" fill="#222" /><rect x="75.3" y="4.0" width="2.0" height="9.0" fill="#0a0a0a" /><circle cx="2.7" cy="3.0" r="2.0" fill="#c01010" /><circle cx="8.1" cy="3.0" r="2.0" fill="#c01010" /><circle cx="13.9" cy="3.0" r="2.0" fill="#c01010" /><rect x="22.0" y="1.0" width="22.8" height="10.5" fill="#1e1e1e" /><circle cx="28.0" cy="6.0" r="3.6" fill="none" stroke="#3a3a3a" stroke-width="0.8" stroke-dasharray="1 0.6"/><circle cx="38.6" cy="6.0" r="3.6" fill="none" stroke="#3a3a3a" stroke-width="0.8" stroke-dasharray="1 0.6"/><circle cx="29.2" cy="19.5" r="6.4" fill="none" stroke="#2b2b2b" stroke-width="1.8"/><rect x="26.0" y="71.0" width="35.2" height="19.0" fill="#2b2b2b" /><circle cx="32.6" cy="80.0" r="4.6" fill="none" stroke="#555" stroke-width="0.8" stroke-dasharray="0.8 0.7"/><circle cx="54.6" cy="80.0" r="4.6" fill="none" stroke="#555" stroke-width="0.8" stroke-dasharray="0.8 0.7"/><rect x="23.4" y="58.0" width="20.6" height="12.5" fill="#1d1d1d" /><rect x="24.6" y="60.0" width="3.0" height="1.0" fill="#aaa" /><rect x="33.0" y="65.6" width="6.0" height="1.2" fill="#888" /><circle cx="26.4" cy="67.0" r="1.4" fill="#999" /><rect x="0.0" y="51.8" width="22.0" height="22.0" fill="#161616" /><circle cx="4.6" cy="64.0" r="4.4" fill="#1f1f1f" /><rect x="1.0" y="74.6" width="9.0" height="8.0" fill="#222" /><rect x="10.4" y="82.0" width="12.0" height="7.0" fill="#1c1c1c" /><rect x="16.6" y="83.4" width="1.6" height="1.6" fill="#a01010" /><rect x="47.9" y="39.3" width="19.0" height="5.5" fill="#333" /><rect x="48.4" y="39.8" width="18.0" height="0.8" fill="#999" /><circle cx="70.4" cy="55.4" r="2.2" fill="none" stroke="#2e2e2e" stroke-width="0.9"/><circle cx="75.6" cy="55.4" r="2.2" fill="none" stroke="#2e2e2e" stroke-width="0.9"/><circle cx="70.4" cy="60.4" r="2.2" fill="none" stroke="#2e2e2e" stroke-width="0.9"/><circle cx="75.6" cy="60.4" r="2.2" fill="none" stroke="#2e2e2e" stroke-width="0.9"/><circle cx="70.4" cy="65.4" r="2.2" fill="none" stroke="#2e2e2e" stroke-width="0.9"/><circle cx="75.6" cy="65.4" r="2.2" fill="none" stroke="#2e2e2e" stroke-width="0.9"/><rect x="1.4" y="30.0" width="18.0" height="18.0" fill="#111" /><rect x="24.0" y="35.0" width="4.0" height="10.0" fill="#151515" /><rect x="36.0" y="35.0" width="3.0" height="10.0" fill="#151515" /><rect x="46.0" y="60.0" width="18.0" height="7.0" fill="#121212" /></svg><svg style="left:1074.6000000000001px;top:162.2px" width="16" height="16" viewBox="0 0 34 34"><g stroke="#1e8ee2" stroke-width="2.97" fill="none" stroke-linecap="butt"><path d="M0.6 0.8L15.4 15.6M4.6 15.6H16.4M15.6 4V16.4"/><path d="M33.4 33.2L18.6 18.4M29.4 18.4H17.6M18.4 30V17.6"/></g></svg><div class="lbl" style="left:988.5px;top:254.8px"><span style="letter-spacing:-0.04px;margin-right:0.04px">bord_man</span></div><svg class="thumb" style="left:188.2px;top:280.0px" width="90" height="90" viewBox="0 0 90 90"><rect x="0.0" y="0.0" width="90.0" height="90.0" fill="#000" /><circle cx="2.2" cy="2.9" r="1.8" fill="#e8a020" /><circle cx="8.0" cy="2.9" r="1.8" fill="#e8a020" /><circle cx="13.6" cy="2.9" r="1.8" fill="#e8a020" /><rect x="49.0" y="41.4" width="4.0" height="2.6" fill="#b02a2a" /><rect x="54.0" y="41.8" width="10.0" height="1.2" fill="#4a4040" /><rect x="53.0" y="44.2" width="12.0" height="0.8" fill="#501818" /><circle cx="32.3" cy="80.0" r="5.0" fill="none" stroke="#4a1010" stroke-width="1" stroke-dasharray="10 6"/><circle cx="55.0" cy="80.0" r="5.0" fill="none" stroke="#4a1010" stroke-width="1" stroke-dasharray="10 6"/><rect x="30.4" y="81.4" width="4.0" height="1.2" fill="#203048" /><rect x="53.0" y="81.4" width="4.0" height="1.2" fill="#203048" /><rect x="76.0" y="73.0" width="6.0" height="1.6" fill="#2a2a2a" /><rect x="9.0" y="85.6" width="16.0" height="0.8" fill="#3a0808" /><rect x="50.0" y="4.0" width="9.0" height="1.6" fill="#300808" /></svg><svg style="left:262.59999999999997px;top:281.2px" width="16" height="16" viewBox="0 0 34 34"><g stroke="#1e8ee2" stroke-width="2.97" fill="none" stroke-linecap="butt"><path d="M0.6 0.8L15.4 15.6M4.6 15.6H16.4M15.6 4V16.4"/><path d="M33.4 33.2L18.6 18.4M29.4 18.4H17.6M18.4 30V17.6"/></g></svg><div class="lbl" style="left:176.5px;top:373.8px"><span style="letter-spacing:-0.28px;margin-right:0.28px">bord_man_n</span></div><svg class="thumb" style="left:304.2px;top:280.0px" width="90" height="90" viewBox="0 0 90 90"><rect x="0.0" y="0.0" width="90.0" height="90.0" fill="#000" /><path d="M29 76Q31 74 34 74.4" stroke="#0a6a4a" stroke-width="0.8" fill="none"/><path d="M36 77L37.6 80L36 83" stroke="#700a0a" stroke-width="0.9" fill="none"/></svg><svg style="left:378.59999999999997px;top:281.2px" width="16" height="16" viewBox="0 0 34 34"><g stroke="#1e8ee2" stroke-width="2.97" fill="none" stroke-linecap="butt"><path d="M0.6 0.8L15.4 15.6M4.6 15.6H16.4M15.6 4V16.4"/><path d="M33.4 33.2L18.6 18.4M29.4 18.4H17.6M18.4 30V17.6"/></g></svg><div class="lbl" style="left:292.5px;top:373.8px"><span style="letter-spacing:-0.47px;margin-right:0.47px">bord_man_n_el</span></div><svg class="thumb" style="left:432.9px;top:306.0px" width="64.5" height="64" viewBox="0 0 64.5 64"><defs><filter id="fbump" x="0" y="0" width="100%" height="100%" color-interpolation-filters="sRGB"><feTurbulence type="fractalNoise" baseFrequency="0.3" numOctaves="2" seed="7" result="n"/><feColorMatrix in="n" type="matrix" values="0.62 0 0 0 0.245  0.62 0 0 0 0.245  0.62 0 0 0 0.245  0 0 0 0 1"/></filter></defs><rect x="0.0" y="0.0" width="64.5" height="64.0" fill="#8c8c8c" /><rect x="0.0" y="0.0" width="64.5" height="64.0" fill="#8c8c8c" filter="url(#fbump)"/><rect x="0.4" y="0.4" width="63.7" height="63.2" fill="none" stroke="#6e6e6e" stroke-width="0.8"/></svg><svg style="left:484.84999999999997px;top:307.2px" width="13" height="13" viewBox="0 0 34 34"><g stroke="#1e8ee2" stroke-width="3.66" fill="none" stroke-linecap="butt"><path d="M0.6 0.8L15.4 15.6M4.6 15.6H16.4M15.6 4V16.4"/><path d="M33.4 33.2L18.6 18.4M29.4 18.4H17.6M18.4 30V17.6"/></g></svg><div class="lbl" style="left:408.5px;top:373.8px"><span style="letter-spacing:0.17px;margin-right:-0.17px">bump</span></div><svg class="thumb" style="left:536.2px;top:303.0px" width="90" height="67" viewBox="0 0 90 67"><rect x="0.0" y="0.0" width="90.0" height="67.0" fill="#818181" /><rect x="0.0" y="0.0" width="66.2" height="32.8" fill="#23252b" rx="1.6"/><rect x="19.8" y="11.4" width="33.2" height="10.0" fill="#5f9a6a" /><rect x="21.4" y="3.1" width="5.6" height="5.6" fill="#c9b552" /><rect x="22.3" y="4.0" width="3.8" height="3.8" fill="#d8d8d0" /><rect x="30.0" y="3.1" width="5.6" height="5.6" fill="#c9b552" /><rect x="30.9" y="4.0" width="3.8" height="3.8" fill="#d8d8d0" /><rect x="37.8" y="3.1" width="5.6" height="5.6" fill="#c9b552" /><rect x="38.7" y="4.0" width="3.8" height="3.8" fill="#d8d8d0" /><rect x="46.0" y="3.1" width="5.6" height="5.6" fill="#c9b552" /><rect x="46.9" y="4.0" width="3.8" height="3.8" fill="#d8d8d0" /><rect x="57.0" y="3.1" width="5.6" height="5.6" fill="#c9b552" /><rect x="57.9" y="4.0" width="3.8" height="3.8" fill="#d8d8d0" /><rect x="21.4" y="24.2" width="5.6" height="5.6" fill="#c9b552" /><rect x="22.3" y="25.1" width="3.8" height="3.8" fill="#d8d8d0" /><rect x="30.0" y="24.2" width="5.6" height="5.6" fill="#c9b552" /><rect x="30.9" y="25.1" width="3.8" height="3.8" fill="#d8d8d0" /><rect x="37.8" y="24.2" width="5.6" height="5.6" fill="#c9b552" /><rect x="38.7" y="25.1" width="3.8" height="3.8" fill="#d8d8d0" /><rect x="46.0" y="24.2" width="5.6" height="5.6" fill="#c9b552" /><rect x="46.9" y="25.1" width="3.8" height="3.8" fill="#d8d8d0" /><rect x="57.0" y="15.9" width="5.6" height="5.2" fill="#c23444" /><rect x="58.2" y="17.4" width="3.2" height="2.6" fill="#e8d0d0" /><rect x="57.0" y="24.2" width="5.6" height="5.6" fill="#2a8070" /><rect x="58.2" y="25.8" width="3.2" height="2.6" fill="#d0e0e0" /><circle cx="8.4" cy="27.3" r="4.1" fill="#0e0e10" /><circle cx="8.8" cy="25.4" r="1.6" fill="#2e2e32" /><rect x="5.3" y="5.5" width="4.1" height="6.2" fill="#0c0c0e" /><rect x="6.3" y="6.6" width="1.6" height="2.6" fill="#55555a" /><rect x="12.4" y="3.4" width="5.4" height="1.2" fill="#8a7a20" /><circle cx="15.5" cy="17.5" r="3.6" fill="#1d1f24" /><rect x="0.0" y="32.8" width="34.6" height="22.8" fill="#efefe2" /><rect x="2.2" y="50.7" width="29.8" height="4.0" fill="#919191" rx="0.8"/><rect x="0.0" y="56.2" width="31.2" height="3.2" fill="#4f1014" /><rect x="0.0" y="59.8" width="17.5" height="5.8" fill="#000" /><rect x="17.5" y="59.8" width="7.4" height="5.8" fill="#484848" /><rect x="0.0" y="66.0" width="34.0" height="1.0" fill="#f4f4f4" /></svg><svg style="left:610.6px;top:304.2px" width="16" height="16" viewBox="0 0 34 34"><g stroke="#1e8ee2" stroke-width="2.97" fill="none" stroke-linecap="butt"><path d="M0.6 0.8L15.4 15.6M4.6 15.6H16.4M15.6 4V16.4"/><path d="M33.4 33.2L18.6 18.4M29.4 18.4H17.6M18.4 30V17.6"/></g></svg><div class="lbl" style="left:524.5px;top:373.8px"><span style="letter-spacing:-0.30px;margin-right:0.30px">buse</span></div><svg class="thumb" style="left:652.2px;top:303.0px" width="90" height="67" viewBox="0 0 90 67"><rect x="0.0" y="0.0" width="90.0" height="67.0" fill="#000" /><rect x="19.8" y="11.4" width="33.2" height="10.0" fill="#5b9c1e" /><rect x="20.6" y="12.2" width="31.6" height="1.2" fill="#2a4a10" opacity="0.9"/><rect x="20.6" y="18.6" width="31.6" height="1.6" fill="#3a6a14" opacity="0.9"/><rect x="21.4" y="3.1" width="5.6" height="5.6" fill="#34442a" /><rect x="30.0" y="3.1" width="5.6" height="5.6" fill="#34442a" /><rect x="37.8" y="3.1" width="5.6" height="5.6" fill="#34442a" /><rect x="46.0" y="3.1" width="5.6" height="5.6" fill="#34442a" /><rect x="57.0" y="3.1" width="5.6" height="5.6" fill="#34442a" /><rect x="21.4" y="24.2" width="5.6" height="5.6" fill="#34442a" /><rect x="30.0" y="24.2" width="5.6" height="5.6" fill="#34442a" /><rect x="37.8" y="24.2" width="5.6" height="5.6" fill="#34442a" /><rect x="46.0" y="24.2" width="5.6" height="5.6" fill="#34442a" /><rect x="57.0" y="24.2" width="5.6" height="5.6" fill="#34442a" /><rect x="57.0" y="15.9" width="5.6" height="5.2" fill="#34442a" /></svg><svg style="left:726.6px;top:304.2px" width="16" height="16" viewBox="0 0 34 34"><g stroke="#1e8ee2" stroke-width="2.97" fill="none" stroke-linecap="butt"><path d="M0.6 0.8L15.4 15.6M4.6 15.6H16.4M15.6 4V16.4"/><path d="M33.4 33.2L18.6 18.4M29.4 18.4H17.6M18.4 30V17.6"/></g></svg><div class="lbl" style="left:640.5px;top:373.8px"><span style="letter-spacing:-0.61px;margin-right:0.61px">buse_n</span></div><svg style="left:778.1px;top:281px" width="73" height="89" viewBox="0 0 73 89"><path d="M7.5 1.4H52.5L71.2 20.2V81.5Q71.2 87.4 65.2 87.4H7.5Q1.4 87.4 1.4 81.5V7.4Q1.4 1.4 7.5 1.4Z" fill="#f5f5f5" stroke="#b3b3b3" stroke-width="2.6" stroke-linejoin="round"/><path d="M52.5 1.6V14.2Q52.5 20.2 58.5 20.2H71Z" fill="#e4e4e4" stroke="#b9b9b9" stroke-width="1" stroke-linejoin="round"/><path d="M40.8 21V43.5H18.3Z" fill="none" stroke="#474747" stroke-width="2.9" stroke-linejoin="miter"/><rect x="36.1" y="30.4" width="19.7" height="17.6" rx="3" fill="#474747"/><circle cx="35.8" cy="44.9" r="7" fill="#f5f5f5" stroke="#474747" stroke-width="2.6"/><text x="36.3" y="75.6" text-anchor="middle" font-family="Liberation Sans, sans-serif" font-weight="700" font-size="18.4" fill="#3d3d3d" textLength="51.6" lengthAdjust="spacingAndGlyphs">TARGA</text></svg><svg style="left:821.1px;top:285.2px" width="34" height="34" viewBox="0 0 34 34"><g stroke="#1e8ee2" stroke-width="2.00" fill="none" stroke-linecap="butt"><path d="M0.6 0.8L15.4 15.6M4.6 15.6H16.4M15.6 4V16.4"/><path d="M33.4 33.2L18.6 18.4M29.4 18.4H17.6M18.4 30V17.6"/></g></svg><div class="lbl" style="left:756.5px;top:373.8px"><span style="letter-spacing:-0.36px;margin-right:0.36px">cab_windows</span></div><svg style="left:894.1px;top:281px" width="73" height="89" viewBox="0 0 73 89"><path d="M7.5 1.4H52.5L71.2 20.2V81.5Q71.2 87.4 65.2 87.4H7.5Q1.4 87.4 1.4 81.5V7.4Q1.4 1.4 7.5 1.4Z" fill="#f5f5f5" stroke="#b3b3b3" stroke-width="2.6" stroke-linejoin="round"/><path d="M52.5 1.6V14.2Q52.5 20.2 58.5 20.2H71Z" fill="#e4e4e4" stroke="#b9b9b9" stroke-width="1" stroke-linejoin="round"/><path d="M40.8 21V43.5H18.3Z" fill="none" stroke="#474747" stroke-width="2.9" stroke-linejoin="miter"/><rect x="36.1" y="30.4" width="19.7" height="17.6" rx="3" fill="#474747"/><circle cx="35.8" cy="44.9" r="7" fill="#f5f5f5" stroke="#474747" stroke-width="2.6"/><text x="36.3" y="75.6" text-anchor="middle" font-family="Liberation Sans, sans-serif" font-weight="700" font-size="18.4" fill="#3d3d3d" textLength="51.6" lengthAdjust="spacingAndGlyphs">TARGA</text></svg><svg style="left:937.1px;top:285.2px" width="34" height="34" viewBox="0 0 34 34"><g stroke="#1e8ee2" stroke-width="2.00" fill="none" stroke-linecap="butt"><path d="M0.6 0.8L15.4 15.6M4.6 15.6H16.4M15.6 4V16.4"/><path d="M33.4 33.2L18.6 18.4M29.4 18.4H17.6M18.4 30V17.6"/></g></svg><div class="lbl" style="left:872.5px;top:373.8px"><span style="letter-spacing:-0.35px;margin-right:0.35px">capace</span></div><svg style="left:1010.0999999999999px;top:281px" width="73" height="89" viewBox="0 0 73 89"><path d="M7.5 1.4H52.5L71.2 20.2V81.5Q71.2 87.4 65.2 87.4H7.5Q1.4 87.4 1.4 81.5V7.4Q1.4 1.4 7.5 1.4Z" fill="#f5f5f5" stroke="#b3b3b3" stroke-width="2.6" stroke-linejoin="round"/><path d="M52.5 1.6V14.2Q52.5 20.2 58.5 20.2H71Z" fill="#e4e4e4" stroke="#b9b9b9" stroke-width="1" stroke-linejoin="round"/><path d="M40.8 21V43.5H18.3Z" fill="none" stroke="#474747" stroke-width="2.9" stroke-linejoin="miter"/><rect x="36.1" y="30.4" width="19.7" height="17.6" rx="3" fill="#474747"/><circle cx="35.8" cy="44.9" r="7" fill="#f5f5f5" stroke="#474747" stroke-width="2.6"/><text x="36.3" y="75.6" text-anchor="middle" font-family="Liberation Sans, sans-serif" font-weight="700" font-size="18.4" fill="#3d3d3d" textLength="51.6" lengthAdjust="spacingAndGlyphs">TARGA</text></svg><svg style="left:1053.1px;top:285.2px" width="34" height="34" viewBox="0 0 34 34"><g stroke="#1e8ee2" stroke-width="2.00" fill="none" stroke-linecap="butt"><path d="M0.6 0.8L15.4 15.6M4.6 15.6H16.4M15.6 4V16.4"/><path d="M33.4 33.2L18.6 18.4M29.4 18.4H17.6M18.4 30V17.6"/></g></svg><div class="lbl" style="left:988.5px;top:373.8px"><span style="letter-spacing:-0.09px;margin-right:0.09px">caroserie</span></div><svg style="left:198.1px;top:400px" width="73" height="89" viewBox="0 0 73 89"><path d="M7.5 1.4H52.5L71.2 20.2V81.5Q71.2 87.4 65.2 87.4H7.5Q1.4 87.4 1.4 81.5V7.4Q1.4 1.4 7.5 1.4Z" fill="#f5f5f5" stroke="#b3b3b3" stroke-width="2.6" stroke-linejoin="round"/><path d="M52.5 1.6V14.2Q52.5 20.2 58.5 20.2H71Z" fill="#e4e4e4" stroke="#b9b9b9" stroke-width="1" stroke-linejoin="round"/><path d="M40.8 21V43.5H18.3Z" fill="none" stroke="#474747" stroke-width="2.9" stroke-linejoin="miter"/><rect x="36.1" y="30.4" width="19.7" height="17.6" rx="3" fill="#474747"/><circle cx="35.8" cy="44.9" r="7" fill="#f5f5f5" stroke="#474747" stroke-width="2.6"/><text x="36.3" y="75.6" text-anchor="middle" font-family="Liberation Sans, sans-serif" font-weight="700" font-size="18.4" fill="#3d3d3d" textLength="51.6" lengthAdjust="spacingAndGlyphs">TARGA</text></svg><svg style="left:241.1px;top:404.2px" width="34" height="34" viewBox="0 0 34 34"><g stroke="#1e8ee2" stroke-width="2.00" fill="none" stroke-linecap="butt"><path d="M0.6 0.8L15.4 15.6M4.6 15.6H16.4M15.6 4V16.4"/><path d="M33.4 33.2L18.6 18.4M29.4 18.4H17.6M18.4 30V17.6"/></g></svg><div class="lbl" style="left:176.5px;top:492.8px"><span style="letter-spacing:-0.22px;margin-right:0.22px">caroserie_2usi</span></div><svg style="left:314.1px;top:400px" width="73" height="89" viewBox="0 0 73 89"><path d="M7.5 1.4H52.5L71.2 20.2V81.5Q71.2 87.4 65.2 87.4H7.5Q1.4 87.4 1.4 81.5V7.4Q1.4 1.4 7.5 1.4Z" fill="#f5f5f5" stroke="#b3b3b3" stroke-width="2.6" stroke-linejoin="round"/><path d="M52.5 1.6V14.2Q52.5 20.2 58.5 20.2H71Z" fill="#e4e4e4" stroke="#b9b9b9" stroke-width="1" stroke-linejoin="round"/><path d="M40.8 21V43.5H18.3Z" fill="none" stroke="#474747" stroke-width="2.9" stroke-linejoin="miter"/><rect x="36.1" y="30.4" width="19.7" height="17.6" rx="3" fill="#474747"/><circle cx="35.8" cy="44.9" r="7" fill="#f5f5f5" stroke="#474747" stroke-width="2.6"/><text x="36.3" y="75.6" text-anchor="middle" font-family="Liberation Sans, sans-serif" font-weight="700" font-size="18.4" fill="#3d3d3d" textLength="51.6" lengthAdjust="spacingAndGlyphs">TARGA</text></svg><svg style="left:357.1px;top:404.2px" width="34" height="34" viewBox="0 0 34 34"><g stroke="#1e8ee2" stroke-width="2.00" fill="none" stroke-linecap="butt"><path d="M0.6 0.8L15.4 15.6M4.6 15.6H16.4M15.6 4V16.4"/><path d="M33.4 33.2L18.6 18.4M29.4 18.4H17.6M18.4 30V17.6"/></g></svg><div class="lbl" style="left:292.5px;top:492.8px"><span style="letter-spacing:-0.22px;margin-right:0.22px">caroserie_120</span></div><svg style="left:430.1px;top:400px" width="73" height="89" viewBox="0 0 73 89"><path d="M7.5 1.4H52.5L71.2 20.2V81.5Q71.2 87.4 65.2 87.4H7.5Q1.4 87.4 1.4 81.5V7.4Q1.4 1.4 7.5 1.4Z" fill="#f5f5f5" stroke="#b3b3b3" stroke-width="2.6" stroke-linejoin="round"/><path d="M52.5 1.6V14.2Q52.5 20.2 58.5 20.2H71Z" fill="#e4e4e4" stroke="#b9b9b9" stroke-width="1" stroke-linejoin="round"/><path d="M40.8 21V43.5H18.3Z" fill="none" stroke="#474747" stroke-width="2.9" stroke-linejoin="miter"/><rect x="36.1" y="30.4" width="19.7" height="17.6" rx="3" fill="#474747"/><circle cx="35.8" cy="44.9" r="7" fill="#f5f5f5" stroke="#474747" stroke-width="2.6"/><text x="36.3" y="75.6" text-anchor="middle" font-family="Liberation Sans, sans-serif" font-weight="700" font-size="18.4" fill="#3d3d3d" textLength="51.6" lengthAdjust="spacingAndGlyphs">TARGA</text></svg><svg style="left:473.1px;top:404.2px" width="34" height="34" viewBox="0 0 34 34"><g stroke="#1e8ee2" stroke-width="2.00" fill="none" stroke-linecap="butt"><path d="M0.6 0.8L15.4 15.6M4.6 15.6H16.4M15.6 4V16.4"/><path d="M33.4 33.2L18.6 18.4M29.4 18.4H17.6M18.4 30V17.6"/></g></svg><div class="lbl" style="left:408.5px;top:492.8px"><span style="letter-spacing:-0.28px;margin-right:0.28px">caroserie_121</span></div><svg style="left:546.1px;top:400px" width="73" height="89" viewBox="0 0 73 89"><path d="M7.5 1.4H52.5L71.2 20.2V81.5Q71.2 87.4 65.2 87.4H7.5Q1.4 87.4 1.4 81.5V7.4Q1.4 1.4 7.5 1.4Z" fill="#f5f5f5" stroke="#b3b3b3" stroke-width="2.6" stroke-linejoin="round"/><path d="M52.5 1.6V14.2Q52.5 20.2 58.5 20.2H71Z" fill="#e4e4e4" stroke="#b9b9b9" stroke-width="1" stroke-linejoin="round"/><path d="M40.8 21V43.5H18.3Z" fill="none" stroke="#474747" stroke-width="2.9" stroke-linejoin="miter"/><rect x="36.1" y="30.4" width="19.7" height="17.6" rx="3" fill="#474747"/><circle cx="35.8" cy="44.9" r="7" fill="#f5f5f5" stroke="#474747" stroke-width="2.6"/><text x="36.3" y="75.6" text-anchor="middle" font-family="Liberation Sans, sans-serif" font-weight="700" font-size="18.4" fill="#3d3d3d" textLength="51.6" lengthAdjust="spacingAndGlyphs">TARGA</text></svg><svg style="left:589.1px;top:404.2px" width="34" height="34" viewBox="0 0 34 34"><g stroke="#1e8ee2" stroke-width="2.00" fill="none" stroke-linecap="butt"><path d="M0.6 0.8L15.4 15.6M4.6 15.6H16.4M15.6 4V16.4"/><path d="M33.4 33.2L18.6 18.4M29.4 18.4H17.6M18.4 30V17.6"/></g></svg><div class="lbl" style="left:524.5px;top:492.8px"><span style="letter-spacing:-0.27px;margin-right:0.27px">clima</span></div><svg class="thumb" style="left:652.2px;top:468.2px" width="90" height="20.8" viewBox="0 0 90 20.8"><rect x="0.0" y="0.0" width="90.0" height="20.8" fill="#000" /><rect x="1.0" y="1.0" width="88.0" height="18.8" fill="#fff" /><rect x="1.0" y="1.0" width="7.6" height="18.8" fill="#1060ea" /><circle cx="4.7" cy="6.0" r="2.2" fill="none" stroke="#3a80f0" stroke-width="0.7"/><text x="4.8" y="16.6" font-family="Liberation Sans, sans-serif" font-size="5.4" font-weight="700" fill="#dfe9ff" text-anchor="middle" textLength="5.6" lengthAdjust="spacingAndGlyphs">RO</text></svg><svg style="left:727.2px;top:469.4px" width="15.4" height="15.4" viewBox="0 0 34 34"><g stroke="#1e8ee2" stroke-width="3.09" fill="none" stroke-linecap="butt"><path d="M0.6 0.8L15.4 15.6M4.6 15.6H16.4M15.6 4V16.4"/><path d="M33.4 33.2L18.6 18.4M29.4 18.4H17.6M18.4 30V17.6"/></g></svg><div class="lbl" style="left:640.5px;top:492.8px"><span style="letter-spacing:-0.43px;margin-right:0.43px">D_kennzeichen</span></div><svg class="thumb" style="left:768.2px;top:399.0px" width="90" height="90" viewBox="0 0 90 90"><defs><pattern id="psc" width="2.2" height="2.2" patternUnits="userSpaceOnUse"><rect width="2.2" height="2.2" fill="#ececec"/><path d="M0 0H2.2M0 0V2.2" stroke="#d0d0d0" stroke-width="0.55"/></pattern><linearGradient id="gsc" x1="0" y1="0" x2="0" y2="1"><stop offset="0" stop-color="#5e5e5e"/><stop offset="0.09" stop-color="#929292"/><stop offset="1" stop-color="#9b9b9b"/></linearGradient><linearGradient id="gsc2" x1="0" y1="0" x2="0" y2="1"><stop offset="0" stop-color="#f1f1f1" stop-opacity="0"/><stop offset="0.75" stop-color="#e6e6e6" stop-opacity="0.2"/><stop offset="1" stop-color="#d0d0d0" stop-opacity="0.7"/></linearGradient></defs><rect x="0.0" y="0.0" width="90.0" height="65.0" fill="url(#psc)" /><rect x="0.0" y="0.0" width="90.0" height="65.0" fill="url(#gsc2)" /><path d="M22.2 0V7.2Q22.2 8.4 23.4 8.4H38Q41 8.4 43 9.6Q45 10.4 47 9.6Q49 8.4 52 8.4H62.4Q63.6 8.4 63.6 7.2V0Z" fill="#f4f4f4" stroke="#9c9c9c" stroke-width="0.6"/><circle cx="11.5" cy="3.7" r="0.8" fill="#555" /><circle cx="28.0" cy="3.7" r="0.8" fill="#555" /><circle cx="31.5" cy="3.7" r="0.8" fill="#555" /><circle cx="60.0" cy="3.7" r="0.8" fill="#555" /><circle cx="79.6" cy="4.2" r="1.1" fill="#999" /><rect x="0.0" y="64.3" width="90.0" height="25.7" fill="url(#gsc)" /></svg><svg style="left:842.6px;top:400.2px" width="16" height="16" viewBox="0 0 34 34"><g stroke="#1e8ee2" stroke-width="2.97" fill="none" stroke-linecap="butt"><path d="M0.6 0.8L15.4 15.6M4.6 15.6H16.4M15.6 4V16.4"/><path d="M33.4 33.2L18.6 18.4M29.4 18.4H17.6M18.4 30V17.6"/></g></svg><div class="lbl" style="left:756.5px;top:492.8px"><span style="letter-spacing:-0.60px;margin-right:0.60px">D_Schedule</span></div><svg class="thumb" style="left:921.0px;top:473.0px" width="16.5" height="16" viewBox="0 0 16.5 16"><rect x="0.0" y="0.0" width="16.5" height="16.0" fill="#ebebeb" /></svg><div class="lbl" style="left:872.5px;top:492.8px"><span style="letter-spacing:-0.02px;margin-right:0.02px">dashboard_gla</span><br><span style="letter-spacing:-0.50px;margin-right:0.50px">ss</span></div><svg class="thumb" style="left:1000.2px;top:399.0px" width="90" height="90" viewBox="0 0 90 90"><rect x="0.0" y="0.0" width="90.0" height="90.0" fill="#242424" /></svg><svg style="left:1074.6000000000001px;top:400.2px" width="16" height="16" viewBox="0 0 34 34"><g stroke="#1e8ee2" stroke-width="2.97" fill="none" stroke-linecap="butt"><path d="M0.6 0.8L15.4 15.6M4.6 15.6H16.4M15.6 4V16.4"/><path d="M33.4 33.2L18.6 18.4M29.4 18.4H17.6M18.4 30V17.6"/></g></svg><div class="lbl" style="left:988.5px;top:492.8px"><span style="letter-spacing:-0.10px;margin-right:0.10px">dashboard_sym</span><br><span style="letter-spacing:0.04px;margin-right:-0.04px">bols</span></div><svg class="thumb" style="left:188.2px;top:535.0px" width="90" height="90" viewBox="0 0 90 90"><rect x="0.0" y="0.0" width="90.0" height="90.0" fill="#242424" /><rect x="3.2" y="7.3" width="6.0" height="1.6" fill="#c4151b" /><rect x="16.3" y="7.3" width="6.0" height="1.6" fill="#c4151b" /><rect x="29.0" y="7.3" width="6.0" height="1.6" fill="#c4151b" /><rect x="42.2" y="7.3" width="6.0" height="1.6" fill="#c4151b" /><rect x="55.0" y="7.3" width="6.0" height="1.6" fill="#c4151b" /><rect x="67.5" y="7.3" width="6.0" height="1.6" fill="#c4151b" /><rect x="81.3" y="5.1" width="5.0" height="5.0" fill="#19b42e" /><rect x="82.7" y="6.5" width="2.2" height="2.2" fill="#242424" /><rect x="2.4" y="15.8" width="7.6" height="5.2" fill="#d99a12" rx="1.6" opacity="0.92"/><rect x="4.0" y="17.9" width="4.4" height="1.0" fill="#242424" opacity="0.55"/><ellipse cx="19.3" cy="18.4" rx="3.2" ry="2.6" fill="none" stroke="#d99a12" stroke-width="1.3"/><rect x="17.3" y="17.8" width="4.0" height="1.2" fill="#d99a12" /><ellipse cx="32" cy="18.4" rx="3.2" ry="2.8" fill="none" stroke="#c4151b" stroke-width="1.3"/><rect x="31.5" y="16.8" width="1.0" height="3.2" fill="#c4151b" /><ellipse cx="46.2" cy="18.4" rx="4.2" ry="2.9" fill="none" stroke="#c4151b" stroke-width="1.3"/><ellipse cx="46.2" cy="18.4" rx="2" ry="1.8" fill="none" stroke="#c4151b" stroke-width="1.3"/><rect x="55.0" y="17.6" width="6.0" height="1.6" fill="#c4151b" /><rect x="67.5" y="17.6" width="6.0" height="1.6" fill="#d99a12" /><rect x="80.5" y="17.6" width="6.0" height="1.6" fill="#c4151b" /><rect x="2.4" y="30.6" width="7.6" height="5.2" fill="#d99a12" rx="1.6" opacity="0.92"/><rect x="4.0" y="32.7" width="4.4" height="1.0" fill="#242424" opacity="0.55"/><ellipse cx="19.3" cy="33.2" rx="4" ry="2.9" fill="none" stroke="#c4151b" stroke-width="1.3"/><ellipse cx="19.3" cy="33.2" rx="1.6" ry="1.4" fill="none" stroke="#c4151b" stroke-width="1.3"/><ellipse cx="32" cy="33.2" rx="4" ry="2.9" fill="none" stroke="#c4151b" stroke-width="1.3"/><ellipse cx="32" cy="33.2" rx="1.6" ry="1.4" fill="none" stroke="#c4151b" stroke-width="1.3"/><path d="M45.2 29.200000000000003L49.6 36.800000000000004H40.800000000000004Z" fill="none" stroke="#d99a12" stroke-width="1.2"/><rect x="44.7" y="31.8" width="1.0" height="3.0" fill="#d99a12" /><rect x="55.0" y="32.4" width="6.0" height="1.6" fill="#d99a12" /><ellipse cx="70.5" cy="33.2" rx="4" ry="2.9" fill="none" stroke="#d99a12" stroke-width="1.3"/><ellipse cx="70.5" cy="33.2" rx="1.8" ry="1.4" fill="none" stroke="#d99a12" stroke-width="1.3"/><ellipse cx="83.5" cy="33.2" rx="4" ry="2.9" fill="none" stroke="#d99a12" stroke-width="1.3"/><rect x="81.1" y="32.6" width="4.8" height="1.2" fill="#d99a12" /><rect x="3.2" y="43.3" width="6.0" height="1.6" fill="#c4151b" /><path d="M15.3 43.1H19.3L23.3 45.1M16.3 45.300000000000004H21.3" stroke="#c4151b" stroke-width="1.1" fill="none"/><path d="M28 42.5L35.6 45.7M28 45.7L35.6 42.9M30 42.300000000000004H35" stroke="#c4151b" stroke-width="1" fill="none"/><rect x="41.0" y="41.7" width="2.2" height="4.8" fill="#2a55c8" /><rect x="43.8" y="41.7" width="1.4" height="4.8" fill="#2a55c8" /><ellipse cx="47.400000000000006" cy="44.1" rx="2" ry="2.3" fill="none" stroke="#2a55c8" stroke-width="1.3"/><rect x="55.0" y="43.3" width="6.0" height="1.6" fill="#d99a12" /><rect x="67.9" y="42.3" width="5.4" height="2.4" fill="#d99a12" /><rect x="68.7" y="44.7" width="1.0" height="1.8" fill="#d99a12" /><rect x="71.9" y="44.7" width="1.0" height="1.8" fill="#d99a12" /><rect x="67.5" y="41.1" width="1.6" height="1.6" fill="#d99a12" /><path d="M81.5 41.5V46.300000000000004H86.3M83.1 46.300000000000004L84.1 42.7L85.9 46.300000000000004" stroke="#d99a12" stroke-width="1" fill="none"/><ellipse cx="6.2" cy="54.3" rx="3.8" ry="2.9" fill="none" stroke="#c4151b" stroke-width="1.3"/><ellipse cx="6.2" cy="54.3" rx="1.8" ry="1.5" fill="none" stroke="#c4151b" stroke-width="1.3"/><rect x="16.3" y="53.5" width="6.0" height="1.6" fill="#c4151b" /><rect x="29.0" y="53.5" width="6.0" height="1.6" fill="#c4151b" /><rect x="42.2" y="53.5" width="6.0" height="1.6" fill="#19b42e" /><rect x="55.0" y="53.5" width="6.0" height="1.6" fill="#d99a12" /><ellipse cx="68.5" cy="54.3" rx="2" ry="1.9" fill="none" stroke="#d99a12" stroke-width="1.3"/><rect x="70.3" y="52.9" width="4.6" height="2.8" fill="none" stroke="#d99a12" stroke-width="0.9"/><rect x="80.7" y="51.3" width="5.6" height="1.4" fill="#d99a12" /><rect x="82.8" y="51.3" width="1.4" height="6.2" fill="#d99a12" /><path d="M32 68.3L38 63.4V66.2H43.8V70.4H38V73.2Z" fill="#19b42e"/><path d="M58 68.3L52 63.4V66.2H46.2V70.4H52V73.2Z" fill="#19b42e"/></svg><svg style="left:262.59999999999997px;top:536.2px" width="16" height="16" viewBox="0 0 34 34"><g stroke="#1e8ee2" stroke-width="2.97" fill="none" stroke-linecap="butt"><path d="M0.6 0.8L15.4 15.6M4.6 15.6H16.4M15.6 4V16.4"/><path d="M33.4 33.2L18.6 18.4M29.4 18.4H17.6M18.4 30V17.6"/></g></svg><svg class="thumb" style="left:304.2px;top:535.0px" width="90" height="90" viewBox="0 0 90 90"><defs><linearGradient id="grd" x1="0" y1="0" x2="0" y2="1"><stop offset="0" stop-color="#858585"/><stop offset="1" stop-color="#a2a2a2"/></linearGradient><filter id="ftree" x="-10%" y="-10%" width="120%" height="120%"><feTurbulence type="fractalNoise" baseFrequency="0.35" numOctaves="2" seed="3"/><feDisplacementMap in="SourceGraphic" scale="5"/></filter></defs><rect x="0.0" y="0.0" width="90.0" height="90.0" fill="#555" /><rect x="0.0" y="46.0" width="90.0" height="44.0" fill="url(#grd)" /><path d="M0 0H90V20.3L46 45.4H44L0 20.3Z" fill="#4b4b4b"/><path d="M0 20.3L44 45.4L0 33.5Z" fill="#808080"/><path d="M90 20.3L46 45.4L90 33.5Z" fill="#7c7c7c"/><path d="M0 33.5L44 45.4L0 38.6Z" fill="#6a6a6a"/><path d="M90 33.5L46 45.4L90 38.6Z" fill="#686868"/><path d="M0 38.6L44 45.4V46.6L0 47.8Z" fill="#4e4e4e"/><path d="M90 38.6L46 45.4V46.6L90 45Z" fill="#505050"/><path d="M44 0H48L46.2 29.6H44.6Z" fill="#bdbdbd"/><rect x="44.7" y="36.0" width="0.9" height="4.0" fill="#aaa" /><g filter="url(#ftree)"><ellipse cx="16" cy="60" rx="11.4" ry="13" fill="#3a3a3a"/><ellipse cx="15" cy="72" rx="12.4" ry="8" fill="#414141"/><ellipse cx="72.8" cy="60" rx="11.6" ry="13" fill="#3a3a3a"/><ellipse cx="74" cy="72" rx="12.4" ry="8" fill="#414141"/><ellipse cx="37" cy="49.6" rx="3.6" ry="3.4" fill="#3c3c3c"/><ellipse cx="49.8" cy="49" rx="3.6" ry="3.2" fill="#3c3c3c"/><ellipse cx="30" cy="48.4" rx="2.4" ry="2" fill="#444"/><ellipse cx="58" cy="48" rx="2.4" ry="1.8" fill="#444"/></g><rect x="20.0" y="34.5" width="1.3" height="14.0" fill="#2a2a2a" /><rect x="66.8" y="34.5" width="1.3" height="14.0" fill="#2a2a2a" /><circle cx="20.6" cy="34.6" r="1.2" fill="#2a2a2a" /><circle cx="67.4" cy="34.6" r="1.2" fill="#2a2a2a" /><path d="M33 52Q35 58 39.6 56.6" stroke="#555" stroke-width="0.5" fill="none"/></svg><svg style="left:378.59999999999997px;top:536.2px" width="16" height="16" viewBox="0 0 34 34"><g stroke="#1e8ee2" stroke-width="2.97" fill="none" stroke-linecap="butt"><path d="M0.6 0.8L15.4 15.6M4.6 15.6H16.4M15.6 4V16.4"/><path d="M33.4 33.2L18.6 18.4M29.4 18.4H17.6M18.4 30V17.6"/></g></svg><svg class="thumb" style="left:426.2px;top:561.0px" width="78" height="64" viewBox="0 0 78 64"><defs><filter id="fgl" x="-20%" y="-60%" width="140%" height="220%"><feGaussianBlur stdDeviation="4.2"/></filter><filter id="fgl2" x="-20%" y="-60%" width="140%" height="220%"><feGaussianBlur stdDeviation="2.8"/></filter></defs><rect x="0.0" y="0.0" width="78.0" height="64.0" fill="#000" /><rect x="5" y="25" width="69" height="15.4" rx="7.7" fill="#e8e8e8" filter="url(#fgl)"/><rect x="17" y="27.6" width="45" height="10.4" rx="5.2" fill="#fff" filter="url(#fgl2)"/></svg><svg style="left:490.59999999999997px;top:562.2px" width="14" height="14" viewBox="0 0 34 34"><g stroke="#1e8ee2" stroke-width="3.40" fill="none" stroke-linecap="butt"><path d="M0.6 0.8L15.4 15.6M4.6 15.6H16.4M15.6 4V16.4"/><path d="M33.4 33.2L18.6 18.4M29.4 18.4H17.6M18.4 30V17.6"/></g></svg><svg style="left:546.1px;top:536px" width="73" height="89" viewBox="0 0 73 89"><path d="M7.5 1.4H52.5L71.2 20.2V81.5Q71.2 87.4 65.2 87.4H7.5Q1.4 87.4 1.4 81.5V7.4Q1.4 1.4 7.5 1.4Z" fill="#f5f5f5" stroke="#b3b3b3" stroke-width="2.6" stroke-linejoin="round"/><path d="M52.5 1.6V14.2Q52.5 20.2 58.5 20.2H71Z" fill="#e4e4e4" stroke="#b9b9b9" stroke-width="1" stroke-linejoin="round"/><path d="M40.8 21V43.5H18.3Z" fill="none" stroke="#474747" stroke-width="2.9" stroke-linejoin="miter"/><rect x="36.1" y="30.4" width="19.7" height="17.6" rx="3" fill="#474747"/><circle cx="35.8" cy="44.9" r="7" fill="#f5f5f5" stroke="#474747" stroke-width="2.6"/><text x="36.3" y="75.6" text-anchor="middle" font-family="Liberation Sans, sans-serif" font-weight="700" font-size="18.4" fill="#3d3d3d" textLength="51.6" lengthAdjust="spacingAndGlyphs">TARGA</text></svg><svg style="left:589.1px;top:540.2px" width="34" height="34" viewBox="0 0 34 34"><g stroke="#1e8ee2" stroke-width="2.00" fill="none" stroke-linecap="butt"><path d="M0.6 0.8L15.4 15.6M4.6 15.6H16.4M15.6 4V16.4"/><path d="M33.4 33.2L18.6 18.4M29.4 18.4H17.6M18.4 30V17.6"/></g></svg><svg style="left:662.1px;top:536px" width="73" height="89" viewBox="0 0 73 89"><path d="M7.5 1.4H52.5L71.2 20.2V81.5Q71.2 87.4 65.2 87.4H7.5Q1.4 87.4 1.4 81.5V7.4Q1.4 1.4 7.5 1.4Z" fill="#f5f5f5" stroke="#b3b3b3" stroke-width="2.6" stroke-linejoin="round"/><path d="M52.5 1.6V14.2Q52.5 20.2 58.5 20.2H71Z" fill="#e4e4e4" stroke="#b9b9b9" stroke-width="1" stroke-linejoin="round"/><path d="M40.8 21V43.5H18.3Z" fill="none" stroke="#474747" stroke-width="2.9" stroke-linejoin="miter"/><rect x="36.1" y="30.4" width="19.7" height="17.6" rx="3" fill="#474747"/><circle cx="35.8" cy="44.9" r="7" fill="#f5f5f5" stroke="#474747" stroke-width="2.6"/><text x="36.3" y="75.6" text-anchor="middle" font-family="Liberation Sans, sans-serif" font-weight="700" font-size="18.4" fill="#3d3d3d" textLength="51.6" lengthAdjust="spacingAndGlyphs">TARGA</text></svg><svg style="left:705.1px;top:540.2px" width="34" height="34" viewBox="0 0 34 34"><g stroke="#1e8ee2" stroke-width="2.00" fill="none" stroke-linecap="butt"><path d="M0.6 0.8L15.4 15.6M4.6 15.6H16.4M15.6 4V16.4"/><path d="M33.4 33.2L18.6 18.4M29.4 18.4H17.6M18.4 30V17.6"/></g></svg><svg style="left:778.1px;top:536px" width="73" height="89" viewBox="0 0 73 89"><path d="M7.5 1.4H52.5L71.2 20.2V81.5Q71.2 87.4 65.2 87.4H7.5Q1.4 87.4 1.4 81.5V7.4Q1.4 1.4 7.5 1.4Z" fill="#f5f5f5" stroke="#b3b3b3" stroke-width="2.6" stroke-linejoin="round"/><path d="M52.5 1.6V14.2Q52.5 20.2 58.5 20.2H71Z" fill="#e4e4e4" stroke="#b9b9b9" stroke-width="1" stroke-linejoin="round"/><path d="M40.8 21V43.5H18.3Z" fill="none" stroke="#474747" stroke-width="2.9" stroke-linejoin="miter"/><rect x="36.1" y="30.4" width="19.7" height="17.6" rx="3" fill="#474747"/><circle cx="35.8" cy="44.9" r="7" fill="#f5f5f5" stroke="#474747" stroke-width="2.6"/><text x="36.3" y="75.6" text-anchor="middle" font-family="Liberation Sans, sans-serif" font-weight="700" font-size="18.4" fill="#3d3d3d" textLength="51.6" lengthAdjust="spacingAndGlyphs">TARGA</text></svg><svg style="left:821.1px;top:540.2px" width="34" height="34" viewBox="0 0 34 34"><g stroke="#1e8ee2" stroke-width="2.00" fill="none" stroke-linecap="butt"><path d="M0.6 0.8L15.4 15.6M4.6 15.6H16.4M15.6 4V16.4"/><path d="M33.4 33.2L18.6 18.4M29.4 18.4H17.6M18.4 30V17.6"/></g></svg><svg style="left:894.1px;top:536px" width="73" height="89" viewBox="0 0 73 89"><path d="M7.5 1.4H52.5L71.2 20.2V81.5Q71.2 87.4 65.2 87.4H7.5Q1.4 87.4 1.4 81.5V7.4Q1.4 1.4 7.5 1.4Z" fill="#f5f5f5" stroke="#b3b3b3" stroke-width="2.6" stroke-linejoin="round"/><path d="M52.5 1.6V14.2Q52.5 20.2 58.5 20.2H71Z" fill="#e4e4e4" stroke="#b9b9b9" stroke-width="1" stroke-linejoin="round"/><path d="M40.8 21V43.5H18.3Z" fill="none" stroke="#474747" stroke-width="2.9" stroke-linejoin="miter"/><rect x="36.1" y="30.4" width="19.7" height="17.6" rx="3" fill="#474747"/><circle cx="35.8" cy="44.9" r="7" fill="#f5f5f5" stroke="#474747" stroke-width="2.6"/><text x="36.3" y="75.6" text-anchor="middle" font-family="Liberation Sans, sans-serif" font-weight="700" font-size="18.4" fill="#3d3d3d" textLength="51.6" lengthAdjust="spacingAndGlyphs">TARGA</text></svg><svg style="left:937.1px;top:540.2px" width="34" height="34" viewBox="0 0 34 34"><g stroke="#1e8ee2" stroke-width="2.00" fill="none" stroke-linecap="butt"><path d="M0.6 0.8L15.4 15.6M4.6 15.6H16.4M15.6 4V16.4"/><path d="M33.4 33.2L18.6 18.4M29.4 18.4H17.6M18.4 30V17.6"/></g></svg><svg class="thumb" style="left:1000.2px;top:535.0px" width="90" height="90" viewBox="0 0 90 90"><defs><linearGradient id="gl1" x1="0" y1="0" x2="1" y2="0"><stop offset="0" stop-color="#2e2e2e"/><stop offset="0.45" stop-color="#484848"/><stop offset="0.6" stop-color="#3c3c3c"/><stop offset="1" stop-color="#454545"/></linearGradient><filter id="fns" x="0" y="0" width="100%" height="100%"><feTurbulence type="fractalNoise" baseFrequency="0.5" numOctaves="2" seed="11"/><feColorMatrix type="matrix" values="0 0 0 0 0.5  0 0 0 0 0.5  0 0 0 0 0.5  0 0 0 0 1"/><feComponentTransfer><feFuncR type="linear" slope="3.4" intercept="-1.2"/><feFuncG type="linear" slope="3.4" intercept="-1.2"/><feFuncB type="linear" slope="3.4" intercept="-1.2"/></feComponentTransfer></filter></defs><rect x="0.0" y="0.0" width="90.0" height="90.0" fill="#020202" /><rect x="7.8" y="0.8" width="33.5" height="30.2" fill="url(#gl1)" /><rect x="59.6" y="0.0" width="30.4" height="14.8" fill="#1b1b1b" /><rect x="42.0" y="1.6" width="9.6" height="2.4" fill="#666" /><rect x="42.4" y="6.0" width="9.0" height="8.0" fill="#111" /><rect x="43.0" y="18.0" width="9.0" height="10.0" fill="#0e0e0e" /><path d="M43.6 19V27M46 19V27M48.6 20V27M51 19V27" stroke="#3a3a3a" stroke-width="0.6"/><rect x="54.6" y="0.8" width="4.8" height="9.4" fill="#d8d0d0" rx="0.8"/><rect x="55.2" y="1.8" width="3.6" height="6.2" fill="#e03020" /><rect x="54.6" y="11.0" width="4.8" height="10.4" fill="#c8ccd8" rx="0.8"/><rect x="55.2" y="12.0" width="3.6" height="8.4" fill="#2050d0" /><rect x="65.0" y="15.3" width="14.6" height="6.2" fill="#7c7c7c" /><rect x="66.0" y="16.2" width="6.0" height="2.0" fill="#b0b0b0" /><rect x="81.4" y="16.0" width="6.8" height="5.5" fill="#a8a8a8" /><rect x="54.6" y="22.6" width="11.2" height="22.6" fill="#181818" /><rect x="55.4" y="28.0" width="9.6" height="0.8" fill="#2a2a2a" /><rect x="55.4" y="33.0" width="9.6" height="0.8" fill="#2a2a2a" /><rect x="67.0" y="23.4" width="21.5" height="20.3" fill="#4a4a4a" /><rect x="67.4" y="24.0" width="5.6" height="5.4" fill="#b4b4b4" /><rect x="74.0" y="22.8" width="6.0" height="9.0" fill="#6a6a6a" /><rect x="81.6" y="23.6" width="6.4" height="4.6" fill="#2c2c2c" /><rect x="67.4" y="30.4" width="6.6" height="12.6" fill="#8c8c8c" /><rect x="74.4" y="32.6" width="5.6" height="5.0" fill="#262626" /><rect x="80.6" y="28.8" width="7.4" height="7.4" fill="#bcbcbc" /><rect x="75.0" y="38.0" width="7.0" height="5.0" fill="#3a3a3a" /><rect x="82.4" y="37.0" width="5.6" height="6.0" fill="#909090" /><rect x="20.9" y="38.2" width="26.2" height="12.8" fill="#c8141c" /><rect x="28.8" y="38.2" width="1.6" height="12.8" fill="#f0d0d0" /><rect x="37.2" y="38.2" width="1.0" height="12.8" fill="#f0c0c0" /><path d="M23.4 47.6V41M25.6 47.6V41.4M33 47.6V41M35 47.6V41.4" stroke="#f4c8c8" stroke-width="1"/><rect x="39.6" y="40.0" width="6.4" height="1.2" fill="#f0c0c0" /><rect x="39.6" y="42.4" width="6.4" height="1.0" fill="#e8a8a8" /><rect x="39.6" y="45.0" width="3.0" height="4.6" fill="#f4e0e0" /><rect x="43.4" y="45.4" width="2.6" height="4.0" fill="#e0a0a0" /><rect x="47.1" y="46.0" width="18.7" height="4.8" fill="#1f1f1f" /><rect x="24.5" y="53.0" width="18.2" height="22.0" fill="#6c6c6c" /><rect x="36.7" y="69.2" width="2.9" height="1.7" fill="#bbbbbb" /><rect x="38.3" y="68.8" width="1.3" height="0.8" fill="#222222" /><rect x="26.4" y="62.6" width="1.3" height="1.5" fill="#444444" /><rect x="24.7" y="57.4" width="1.4" height="2.0" fill="#999999" /><rect x="27.1" y="69.3" width="1.1" height="1.6" fill="#eeeeee" /><rect x="26.7" y="72.8" width="0.8" height="1.8" fill="#444444" /><rect x="38.8" y="58.9" width="2.9" height="1.5" fill="#444444" /><rect x="27.5" y="72.8" width="1.2" height="2.1" fill="#999999" /><rect x="29.4" y="60.4" width="1.2" height="0.9" fill="#eeeeee" /><rect x="29.9" y="69.7" width="2.1" height="1.5" fill="#333333" /><rect x="25.6" y="60.2" width="1.5" height="1.7" fill="#dddddd" /><rect x="32.4" y="67.4" width="0.9" height="2.1" fill="#444444" /><rect x="40.1" y="60.3" width="1.7" height="1.5" fill="#222222" /><rect x="30.5" y="64.8" width="0.8" height="0.8" fill="#eeeeee" /><rect x="34.7" y="72.5" width="1.1" height="1.0" fill="#444444" /><rect x="30.1" y="60.2" width="2.0" height="1.8" fill="#555555" /><rect x="34.2" y="68.9" width="1.6" height="1.1" fill="#333333" /><rect x="40.0" y="54.9" width="1.5" height="1.6" fill="#eeeeee" /><rect x="30.1" y="71.9" width="2.0" height="1.1" fill="#444444" /><rect x="29.5" y="69.3" width="2.2" height="1.7" fill="#dddddd" /><rect x="40.8" y="56.3" width="0.9" height="2.1" fill="#bbbbbb" /><rect x="25.0" y="68.1" width="1.6" height="1.1" fill="#eeeeee" /><rect x="26.9" y="73.0" width="2.2" height="1.8" fill="#eeeeee" /><rect x="38.3" y="55.7" width="2.4" height="2.0" fill="#dddddd" /><rect x="26.2" y="61.9" width="1.1" height="1.9" fill="#eeeeee" /><rect x="26.8" y="71.8" width="2.2" height="0.9" fill="#bbbbbb" /><rect x="40.2" y="67.1" width="1.5" height="1.1" fill="#555555" /><rect x="31.1" y="56.0" width="1.6" height="2.1" fill="#555555" /><rect x="34.8" y="63.2" width="1.5" height="0.8" fill="#444444" /><rect x="32.9" y="64.2" width="1.9" height="0.8" fill="#bbbbbb" /><rect x="35.9" y="66.5" width="2.5" height="1.2" fill="#dddddd" /><rect x="38.2" y="58.4" width="3.0" height="1.7" fill="#bbbbbb" /><rect x="35.2" y="64.8" width="0.8" height="1.5" fill="#dddddd" /><rect x="29.8" y="58.6" width="1.4" height="1.4" fill="#bbbbbb" /><rect x="30.2" y="66.1" width="2.4" height="1.9" fill="#dddddd" /><rect x="39.6" y="56.5" width="2.7" height="1.3" fill="#dddddd" /><rect x="40.2" y="63.6" width="2.0" height="0.9" fill="#dddddd" /><rect x="39.9" y="62.7" width="2.3" height="1.7" fill="#dddddd" /><rect x="27.3" y="68.9" width="2.1" height="1.6" fill="#eeeeee" /><rect x="29.5" y="64.3" width="2.7" height="1.1" fill="#eeeeee" /><rect x="27.7" y="65.0" width="2.2" height="1.0" fill="#222222" /><rect x="34.8" y="53.9" width="1.8" height="1.0" fill="#444444" /><rect x="39.1" y="55.3" width="2.9" height="1.4" fill="#222222" /><rect x="31.3" y="60.2" width="2.3" height="0.8" fill="#222222" /><rect x="28.4" y="71.4" width="0.8" height="1.3" fill="#999999" /><rect x="38.5" y="70.7" width="2.3" height="1.5" fill="#bbbbbb" /><rect x="33.5" y="59.1" width="1.4" height="1.4" fill="#222222" /><rect x="40.2" y="69.7" width="1.7" height="1.8" fill="#bbbbbb" /><rect x="32.2" y="56.2" width="1.6" height="1.4" fill="#dddddd" /><rect x="40.4" y="65.4" width="1.6" height="2.0" fill="#999999" /><rect x="30.8" y="59.7" width="2.8" height="1.5" fill="#222222" /><rect x="34.8" y="71.2" width="1.6" height="1.3" fill="#dddddd" /><rect x="32.6" y="62.8" width="2.4" height="1.2" fill="#999999" /><rect x="34.3" y="58.3" width="3.0" height="1.4" fill="#444444" /><rect x="24.8" y="72.3" width="1.5" height="2.0" fill="#eeeeee" /><rect x="32.3" y="55.5" width="2.2" height="1.3" fill="#444444" /><rect x="25.2" y="55.8" width="1.7" height="1.4" fill="#bbbbbb" /><rect x="28.5" y="62.7" width="0.9" height="1.4" fill="#bbbbbb" /><rect x="36.3" y="58.8" width="1.9" height="2.1" fill="#444444" /><rect x="24.8" y="55.6" width="1.4" height="1.7" fill="#333333" /><rect x="36.5" y="53.5" width="1.6" height="1.7" fill="#bbbbbb" /><rect x="25.1" y="58.1" width="1.8" height="2.0" fill="#444444" /><rect x="24.7" y="68.9" width="1.7" height="1.5" fill="#999999" /><rect x="38.6" y="70.2" width="1.8" height="1.7" fill="#555555" /><rect x="39.2" y="62.5" width="2.5" height="1.1" fill="#999999" /><rect x="35.9" y="61.8" width="1.4" height="1.8" fill="#222222" /><rect x="26.8" y="62.8" width="2.0" height="1.4" fill="#bbbbbb" /><rect x="33.3" y="61.7" width="2.0" height="0.8" fill="#dddddd" /><rect x="28.9" y="54.7" width="0.9" height="2.0" fill="#999999" /><rect x="36.4" y="73.0" width="3.0" height="1.7" fill="#dddddd" /><rect x="20.0" y="66.0" width="6.0" height="9.0" fill="#555" /><rect x="43.2" y="52.0" width="22.9" height="23.0" fill="#434343" /><rect x="43.6" y="52.4" width="22.0" height="1.4" fill="#8a8a8a" /><rect x="44.0" y="55.4" width="10.0" height="10.0" fill="#2b2b2b" /><rect x="55.4" y="55.0" width="9.6" height="6.4" fill="#8a8a8a" /><rect x="56.0" y="62.4" width="9.0" height="4.0" fill="#6c6c6c" /><rect x="44.6" y="67.6" width="9.0" height="4.6" fill="#2a2a2a" /><rect x="45.4" y="69.0" width="7.4" height="1.2" fill="#aaa" /><rect x="55.6" y="68.0" width="9.6" height="3.0" fill="#555" /><circle cx="71.8" cy="48.7" r="3.3" fill="#a9b1b9" /><circle cx="79.4" cy="48.7" r="3.3" fill="#a2a8ae" /><rect x="86.0" y="45.2" width="4.0" height="10.2" fill="#585858" /><rect x="84.0" y="55.6" width="4.4" height="4.0" fill="#3a3a3a" /><rect x="86.4" y="56.6" width="1.4" height="1.6" fill="#a02020" /><rect x="67.4" y="67.5" width="14.8" height="3.6" fill="#2462c2" /><rect x="68.6" y="68.0" width="1.8" height="2.4" fill="#dfe8f8" /><rect x="72.4" y="68.0" width="1.8" height="2.4" fill="#dfe8f8" /><rect x="76.0" y="68.0" width="1.8" height="2.4" fill="#dfe8f8" /><rect x="79.4" y="68.0" width="1.8" height="2.4" fill="#dfe8f8" /><rect x="67.4" y="71.6" width="4.0" height="3.0" fill="#d02020" /><rect x="71.8" y="71.6" width="4.0" height="3.0" fill="#e8e8e8" /><rect x="76.2" y="71.6" width="5.8" height="3.0" fill="#20a040" /><rect x="83.0" y="71.0" width="6.0" height="3.4" fill="#bbb" /></svg><svg style="left:1074.6000000000001px;top:536.2px" width="16" height="16" viewBox="0 0 34 34"><g stroke="#1e8ee2" stroke-width="2.97" fill="none" stroke-linecap="butt"><path d="M0.6 0.8L15.4 15.6M4.6 15.6H16.4M15.6 4V16.4"/><path d="M33.4 33.2L18.6 18.4M29.4 18.4H17.6M18.4 30V17.6"/></g></svg><div class="abs" style="left:292.3px;top:153px;width:115.8px;height:129.8px;border:7px solid #97c905"></div><div class="abs" style="left:1115px;top:151px;width:17px;height:459px;background:#f1f1f1"></div><div class="abs" style="left:1122px;top:168px;width:2.4px;height:75.5px;background:#858585;border-radius:1px"></div></div></div><div class="abs" style="left:0;top:609.5px;width:1139px;height:24px;background:#fff"></div><div class="t" style="left:22.3px;top:613.5px;color:#3a3d4a;font-size:12.8px;letter-spacing:0.1px">160 <span class="cj">个项目</span></div><div class="abs" style="left:93px;top:616px;width:1px;height:12px;background:#e4e4e4"></div><div class="t" style="left:104px;top:613.5px;color:#3a3d4a;font-size:12.8px"><span class="cj">选中</span> 1 <span class="cj">个项目</span></div><div class="abs" style="left:189px;top:616px;width:1px;height:12px;background:#e4e4e4"></div><div class="abs" style="left:1105.2px;top:610.2px;width:22px;height:22.6px;background:#d9e9f7;border:1px solid #4aa2ea"></div><svg style="left:1048px;top:608px" width="84" height="26" viewBox="0 0 84 26"><text x="2.2" y="18.9" font-family="Liberation Sans, sans-serif" font-weight="400" font-size="17.5" textLength="77" lengthAdjust="spacingAndGlyphs" fill="#000" stroke="#000" stroke-width="2.9" stroke-linejoin="miter">@Wefans</text><text x="2.2" y="18.9" font-family="Liberation Sans, sans-serif" font-weight="400" font-size="17.5" textLength="77" lengthAdjust="spacingAndGlyphs" fill="#fff" stroke="#000" stroke-width="0.15">@Wefans</text></svg></div></div></body></html>
